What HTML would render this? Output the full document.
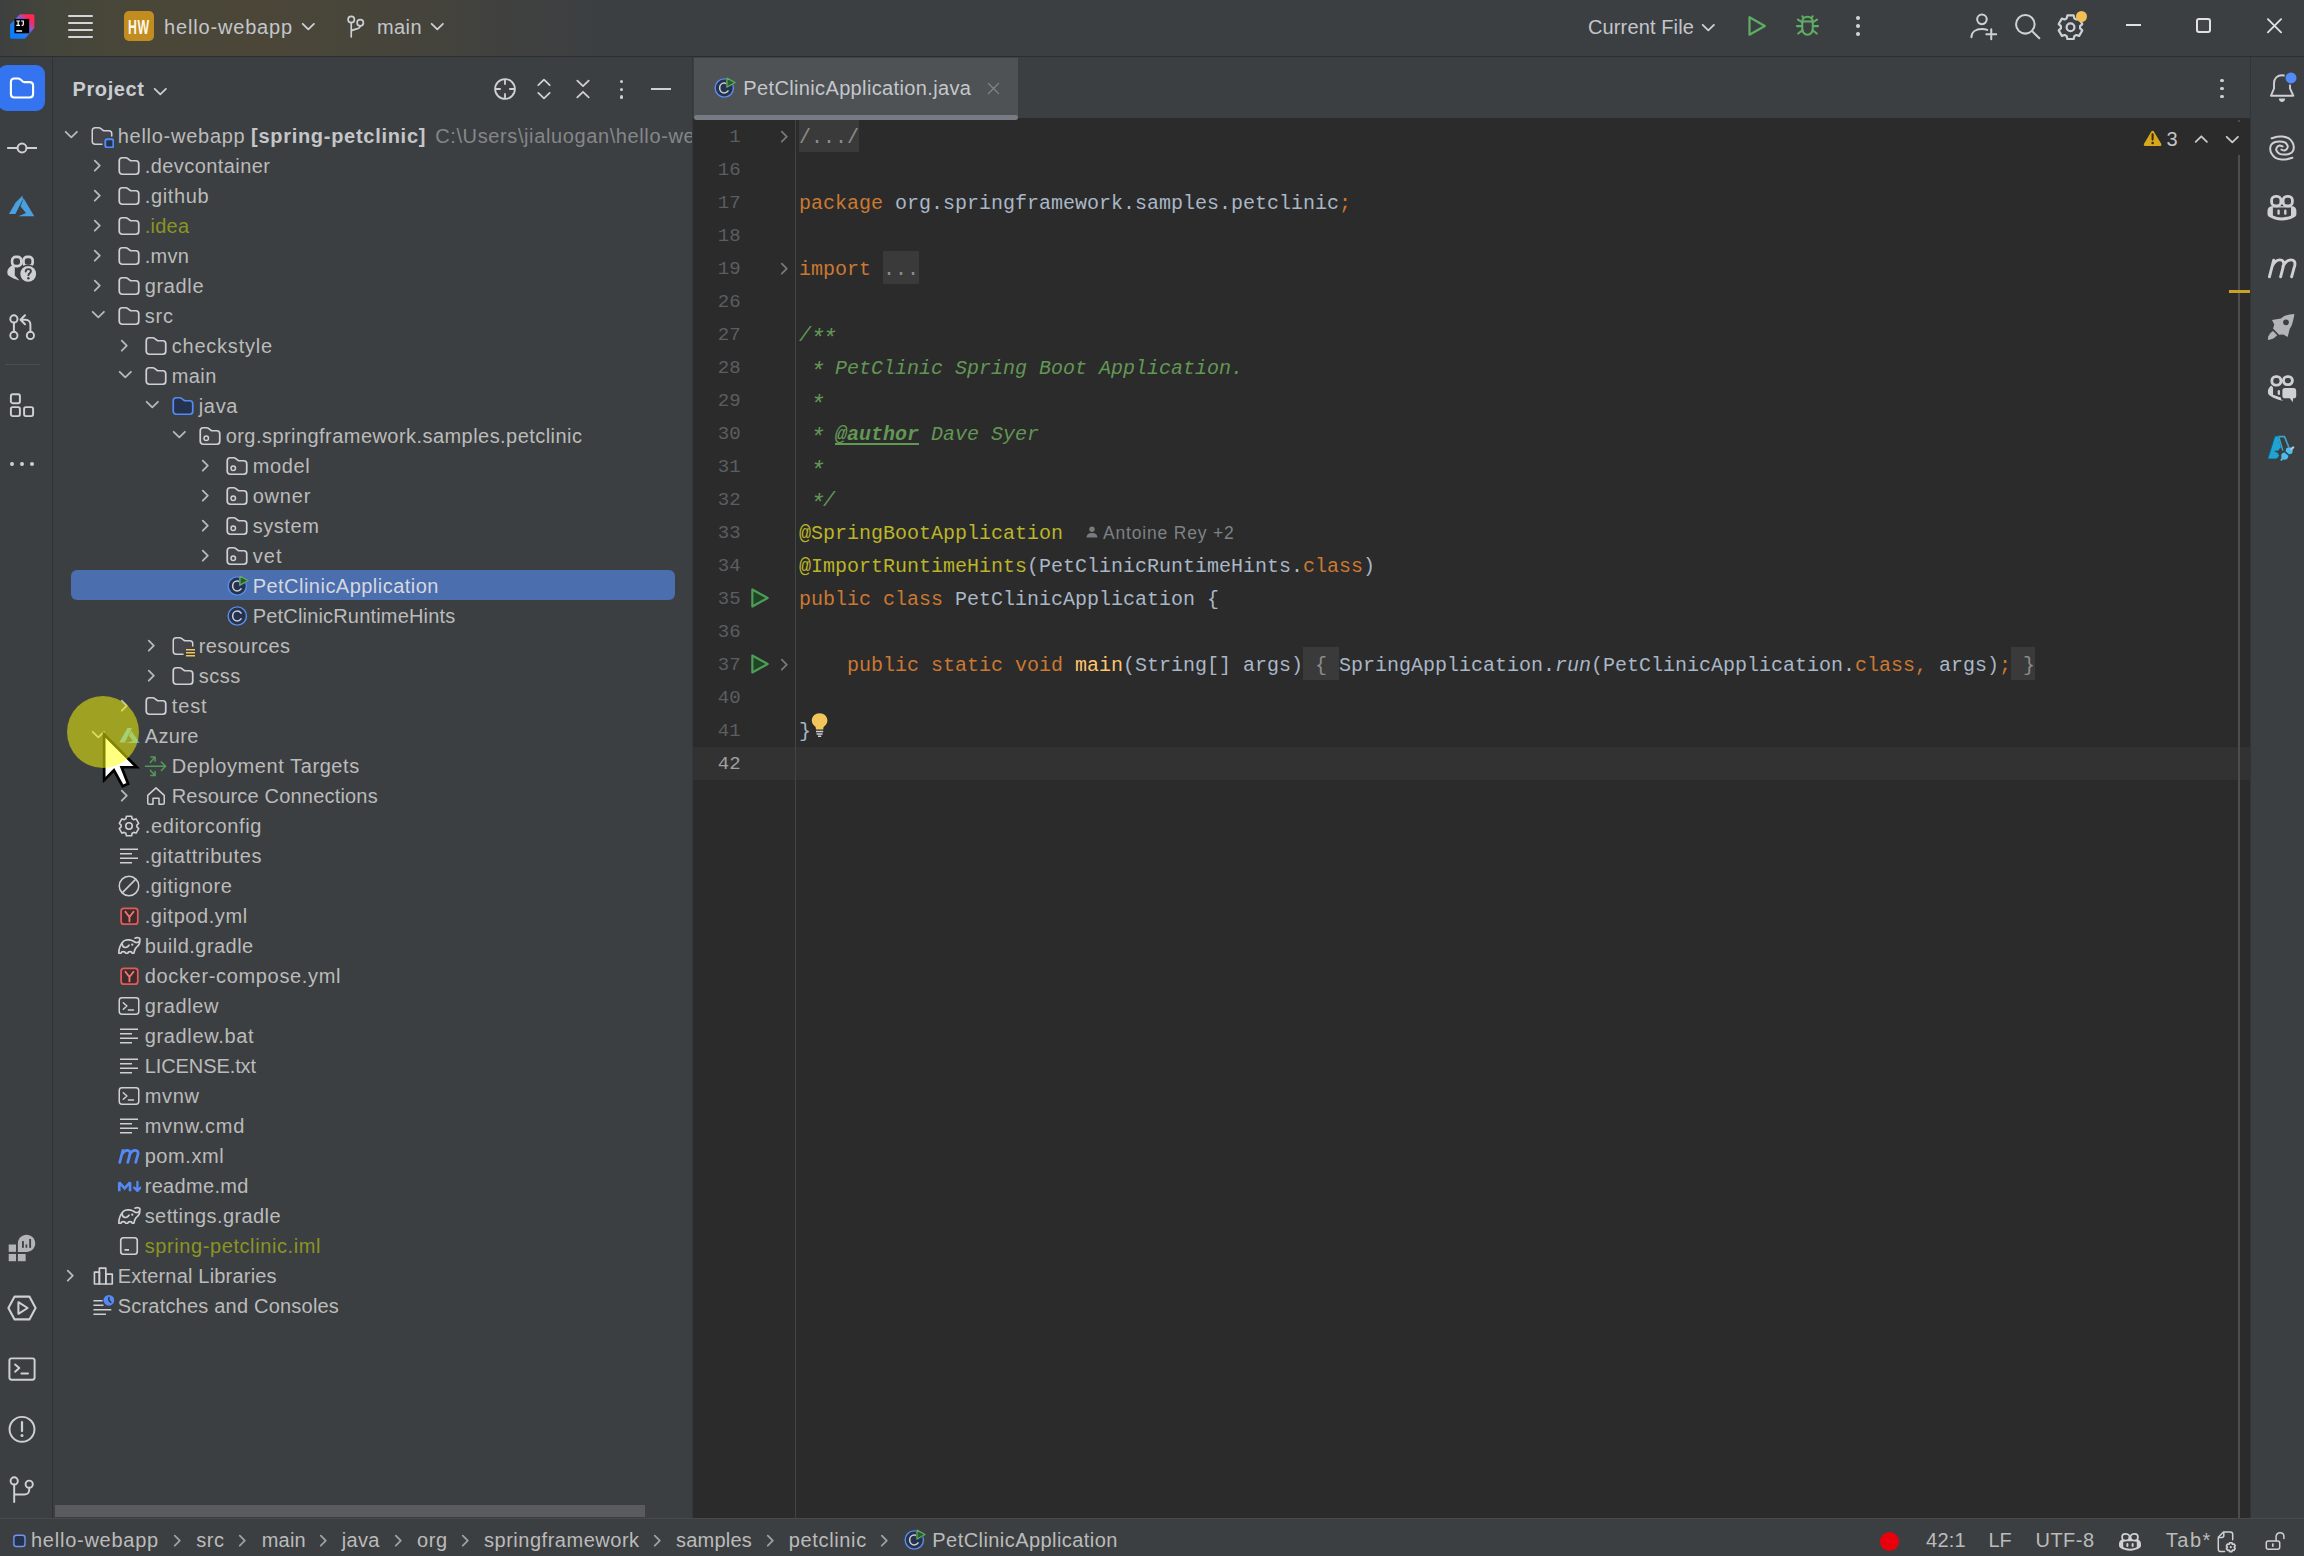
<!DOCTYPE html>
<html><head><meta charset="utf-8"><title>hello-webapp – PetClinicApplication.java</title><style>
html,body{margin:0;padding:0;background:#3C3F41;overflow:hidden}
body{width:2304px;height:1556px;position:relative;font-family:"Liberation Sans",sans-serif;}
.b{position:absolute;display:block}
.t{position:absolute;white-space:pre;display:block}
</style></head><body>
<div class="b" style="left:0px;top:0px;width:2304px;height:56px;background:#3C3F41;background:linear-gradient(90deg,#3e403f 0px,#44453b 50px,#4a4738 140px,#4b4638 260px,#48453a 350px,#44433c 440px,#3f4140 520px,#3C3F41 600px);"></div>
<div class="b" style="left:0px;top:56px;width:2304px;height:1px;background:#2B2D2E;"></div>
<div class="b" style="left:0px;top:57px;width:52px;height:1461px;background:#3C3F41;"></div>
<div class="b" style="left:52px;top:57px;width:1px;height:1461px;background:#303234;"></div>
<div class="b" style="left:53px;top:57px;width:638.5px;height:1461px;background:#3C3F41;"></div>
<div class="b" style="left:691.5px;top:57px;width:1.5px;height:1461px;background:#35383A;"></div>
<div class="b" style="left:693px;top:57px;width:1557px;height:61px;background:#3C3F41;"></div>
<div class="b" style="left:693px;top:118px;width:1557px;height:1400px;background:#2B2B2B;"></div>
<div class="b" style="left:2250px;top:57px;width:54px;height:1461px;background:#3C3F41;"></div>
<div class="b" style="left:2250px;top:57px;width:1px;height:1461px;background:#323537;"></div>
<div class="b" style="left:0px;top:1518px;width:2304px;height:38px;background:#3C3F41;"></div>
<div class="b" style="left:0px;top:1518px;width:2304px;height:1px;background:#47494B;"></div>
<svg class="b" style="left:10px;top:13.6px;" width="25" height="25" viewBox="0 0 25 25" fill="none">
<defs><linearGradient id="ijg" x1="0.1" y1="0.9" x2="0.95" y2="0.05"><stop offset="0" stop-color="#087CFA"/><stop offset="0.42" stop-color="#2C7DF5"/><stop offset="0.62" stop-color="#8A5AD8"/><stop offset="0.82" stop-color="#FE2857"/><stop offset="1" stop-color="#FE2857"/></linearGradient></defs>
<path d="M10.6 0.2H22.8C23.7 0.2 24.4 0.9 24.4 1.8V13.2C24.4 13.7 24.2 14.1 23.9 14.4L15.4 24.2C15.1 24.6 14.7 24.8 14.2 24.8H1.7C0.8 24.8 0.1 24.1 0.1 23.2V11.2C0.1 10.7 0.3 10.3 0.6 10L9.4 0.7C9.7 0.4 10.1 0.2 10.6 0.2Z" fill="url(#ijg)"/>
<rect x="4.4" y="4.9" width="14.8" height="14.4" fill="#000"/>
<path d="M6.3 7H10M8.15 7V11.3M6.3 11.4H10" stroke="#fff" stroke-width="1.2" fill="none"/>
<path d="M11 7H13.3V10.2C13.3 11.1 12.7 11.5 11.6 11.4" stroke="#fff" stroke-width="1.2" fill="none"/>
<rect x="6.3" y="16.3" width="5.8" height="1.4" fill="#fff"/>
</svg>
<div class="b" style="left:68px;top:15px;width:25px;height:2px;background:#D3D5DA;border-radius:1px;"></div>
<div class="b" style="left:68px;top:22px;width:25px;height:2px;background:#D3D5DA;border-radius:1px;"></div>
<div class="b" style="left:68px;top:29px;width:25px;height:2px;background:#D3D5DA;border-radius:1px;"></div>
<div class="b" style="left:68px;top:36px;width:25px;height:2px;background:#D3D5DA;border-radius:1px;"></div>
<div class="b" style="left:124px;top:10.8px;width:30.2px;height:30.2px;background:#C18D20;border-radius:5px;"></div>
<span class="t" style="left:128.3px;top:12.3px;line-height:30px;font-size:19.5px;color:#FFF8E8;font-family:'Liberation Sans',sans-serif;font-weight:700;transform:scaleX(0.63);transform-origin:0 50%;letter-spacing:1px;">HW</span>
<span class="t" style="letter-spacing:0.835px;left:164px;top:11.5px;line-height:30px;font-size:20px;color:#C3C6CB;font-family:'Liberation Sans',sans-serif;">hello-webapp</span>
<svg class="b" style="left:295.5px;top:16.3px;" width="24" height="24" viewBox="0 0 16 16" fill="none"><path d="M4.45 5.2L8.2 8.9L11.95 5.2" stroke="#CDD0D6" stroke-width="1.2" stroke-linecap="round" stroke-linejoin="round"/></svg>
<svg class="b" style="left:343px;top:12px;" width="30" height="30" viewBox="0 0 20 20" fill="none">
<circle cx="5.5" cy="5" r="2.1" stroke="#CDD0D6" stroke-width="1.1"/>
<circle cx="11.5" cy="7.2" r="2.1" stroke="#CDD0D6" stroke-width="1.1"/>
<path d="M5.5 7.1V16.6M5.5 13C5.5 11.2 11.5 12 11.5 9.3" stroke="#CDD0D6" stroke-width="1.1" stroke-linecap="round"/>
</svg>
<span class="t" style="letter-spacing:0.410px;left:377px;top:11.5px;line-height:30px;font-size:20px;color:#C3C6CB;font-family:'Liberation Sans',sans-serif;">main</span>
<svg class="b" style="left:425px;top:16.3px;" width="24" height="24" viewBox="0 0 16 16" fill="none"><path d="M4.45 5.2L8.2 8.9L11.95 5.2" stroke="#CDD0D6" stroke-width="1.2" stroke-linecap="round" stroke-linejoin="round"/></svg>
<span class="t" style="letter-spacing:0.126px;left:1588px;top:11.5px;line-height:30px;font-size:20px;color:#C3C6CB;font-family:'Liberation Sans',sans-serif;">Current File</span>
<svg class="b" style="left:1695.5px;top:17.2px;" width="24" height="24" viewBox="0 0 16 16" fill="none"><path d="M4.45 5.2L8.2 8.9L11.95 5.2" stroke="#CDD0D6" stroke-width="1.2" stroke-linecap="round" stroke-linejoin="round"/></svg>
<svg class="b" style="left:1742px;top:11px;" width="30" height="30" viewBox="0 0 20 20" fill="none"><path d="M5 4.2V15.8L15.2 10Z" stroke="#5FAD65" stroke-width="1.5" stroke-linejoin="round"/></svg>
<svg class="b" style="left:1792px;top:10px;" width="31" height="31" viewBox="0 0 20 20" fill="none">
<path d="M6.6 7.5C6.6 5.6 8.1 4.3 10 4.3C11.9 4.3 13.4 5.6 13.4 7.5V12.3C13.4 14.3 11.9 15.9 10 15.9C8.1 15.9 6.6 14.3 6.6 12.3Z" stroke="#5FAD65" stroke-width="1.3"/>
<path d="M6.8 7.4H13.2" stroke="#5FAD65" stroke-width="1.3"/>
<path d="M7.6 5.2L6.6 4.0M12.4 5.2L13.4 4.0M6.6 10.4H3.2M13.4 10.4H16.8M6.8 8L3.8 6.2M13.2 8L16.2 6.2M6.9 13L4 15.2M13.1 13L16 15.2" stroke="#5FAD65" stroke-width="1.3" stroke-linecap="round"/>
</svg>
<div class="b" style="left:1855.9px;top:15.6px;width:4.2px;height:4.2px;background:#D3D5DA;border-radius:50%;"></div>
<div class="b" style="left:1855.9px;top:23.9px;width:4.2px;height:4.2px;background:#D3D5DA;border-radius:50%;"></div>
<div class="b" style="left:1855.9px;top:32.199999999999996px;width:4.2px;height:4.2px;background:#D3D5DA;border-radius:50%;"></div>
<svg class="b" style="left:1968px;top:11px;" width="31" height="31" viewBox="0 0 20 20" fill="none">
<circle cx="9" cy="5.4" r="3.1" stroke="#CDD0D6" stroke-width="1.3"/>
<path d="M2.2 17C2.2 13.6 5 11.6 9 11.6C10.3 11.6 11.4 11.8 12.4 12.2" stroke="#CDD0D6" stroke-width="1.3" stroke-linecap="round"/>
<path d="M15 11.8V18.2M11.8 15H18.2" stroke="#CDD0D6" stroke-width="1.3" stroke-linecap="round"/>
</svg>
<svg class="b" style="left:2012px;top:11px;" width="31" height="31" viewBox="0 0 20 20" fill="none">
<circle cx="8.6" cy="8.6" r="6" stroke="#CDD0D6" stroke-width="1.3"/>
<path d="M13 13L17.6 17.6" stroke="#CDD0D6" stroke-width="1.3" stroke-linecap="round"/>
</svg>
<svg class="b" style="left:2055px;top:11px;" width="31" height="31" viewBox="-0.5 -0.9 17 17" fill="none"><path d="M5.90 3.14 L6.27 1.53 L9.73 1.53 L10.10 3.14 L11.16 3.75 L12.74 3.26 L14.47 6.27 L13.26 7.39 L13.26 8.61 L14.47 9.73 L12.74 12.74 L11.16 12.25 L10.10 12.86 L9.73 14.47 L6.27 14.47 L5.90 12.86 L4.84 12.25 L3.26 12.74 L1.53 9.73 L2.74 8.61 L2.74 7.39 L1.53 6.27 L3.26 3.26 L4.84 3.75Z" stroke="#CDD0D6" stroke-width="1.2" stroke-linejoin="round"/><circle cx="8" cy="8" r="2.15" stroke="#CDD0D6" stroke-width="1.2"/></svg>
<div class="b" style="left:2075.5px;top:10.5px;width:11px;height:11px;background:#F2BF57;border-radius:50%;"></div>
<div class="b" style="left:2126px;top:23.8px;width:15.2px;height:2px;background:#DFE1E5;"></div>
<div class="b" style="left:2196px;top:17.8px;width:15.2px;height:15.4px;background:#434648;border:2px solid #DFE1E5;border-radius:3px;box-sizing:border-box;"></div>
<svg class="b" style="left:2266px;top:17px;" width="17" height="17" viewBox="0 0 17 17" fill="none"><path d="M1.9 2.1L15.1 15.3M15.1 2.1L1.9 15.3" stroke="#DFE1E5" stroke-width="1.8" stroke-linecap="round"/></svg>
<div class="b" style="left:-2px;top:64.5px;width:46.8px;height:46px;background:#3574F0;border-radius:9px;"></div>
<svg class="b" style="left:7px;top:73px;" width="30" height="30" viewBox="0 0 20 20" fill="none"><path d="M2.6 6C2.6 4.7 3.6 3.7 4.9 3.7H7.4C7.9 3.7 8.4 3.9 8.8 4.2L10.6 5.7C10.9 5.9 11.3 6.1 11.7 6.1H15.1C16.4 6.1 17.4 7.1 17.4 8.4V14C17.4 15.3 16.4 16.3 15.1 16.3H4.9C3.6 16.3 2.6 15.3 2.6 14Z" stroke="#FFFFFF" stroke-width="1.4" stroke-linejoin="round"/></svg>
<svg class="b" style="left:7px;top:133px;" width="30" height="30" viewBox="0 0 20 20" fill="none"><circle cx="10" cy="10" r="3" stroke="#CED0D6" stroke-width="1.3"/><path d="M0.6 10H7M13 10H19.8" stroke="#CED0D6" stroke-width="1.3" stroke-linecap="round"/></svg>
<svg class="b" style="left:8px;top:194px;" width="28" height="24" viewBox="0 0 28 24" fill="none"><path d="M14.4 1.8L14.9 5.2L7.4 20H0.9L7.6 8.4Z" fill="#4A9FDE"/><path d="M15.6 4.2L26.3 22.3H10.4L18 19L12.6 12.4Z" fill="#4A9FDE"/></svg>
<svg class="b" style="left:4px;top:250px;" width="36" height="36" viewBox="0 0 36 36" fill="none">
<rect x="8.1" y="6.9" width="9.2" height="9.2" rx="3.7" stroke="#CED0D6" stroke-width="2.6"/>
<rect x="19.5" y="6.9" width="9.2" height="9.2" rx="3.7" stroke="#CED0D6" stroke-width="2.6"/>
<path d="M8.6 15.2C5.4 16.6 3.3 19.4 3.3 22C3.3 23.6 3.6 24.8 4.6 25.6C7.4 27.8 11.4 29.6 15.6 30.4L10.8 25.4V17.6Z" fill="#CED0D6"/>
<circle cx="24.2" cy="23.8" r="9.3" fill="#3C3F41"/>
<circle cx="24.2" cy="23.8" r="7.9" fill="#CED0D6"/>
<path d="M21.7 21.6C21.7 20 22.7 19.1 24.3 19.1C25.9 19.1 26.9 20 26.9 21.3C26.9 23.2 24.4 23.2 24.4 25.2" stroke="#3C3F41" stroke-width="1.9" stroke-linecap="round" fill="none"/>
<circle cx="24.4" cy="28.2" r="1.2" fill="#3C3F41"/>
</svg>
<svg class="b" style="left:7px;top:312px;" width="30" height="30" viewBox="0 0 20 20" fill="none">
<circle cx="4.6" cy="4.6" r="2.4" stroke="#CED0D6" stroke-width="1.3"/>
<circle cx="4.6" cy="15.6" r="2.4" stroke="#CED0D6" stroke-width="1.3"/>
<circle cx="15.6" cy="15.6" r="2.4" stroke="#CED0D6" stroke-width="1.3"/>
<path d="M4.6 7V13.2M15.6 13.2V8.4C15.6 6.4 14.4 5.2 12.4 5.2H9.4M12 2.2L9 5.2L12 8.2" stroke="#CED0D6" stroke-width="1.3" stroke-linecap="round" stroke-linejoin="round"/>
</svg>
<div class="b" style="left:5px;top:364px;width:35px;height:1px;background:#4B4E50;"></div>
<svg class="b" style="left:7px;top:389.5px;" width="30" height="30" viewBox="0 0 20 20" fill="none">
<rect x="2.6" y="2.8" width="6" height="6" rx="1.2" stroke="#CED0D6" stroke-width="1.3"/>
<rect x="2.6" y="11.4" width="6" height="6" rx="1.2" stroke="#CED0D6" stroke-width="1.3"/>
<rect x="11.4" y="11.4" width="6" height="6" rx="1.2" stroke="#CED0D6" stroke-width="1.3"/>
</svg>
<div class="b" style="left:9.7px;top:461.5px;width:4px;height:4px;background:#CED0D6;border-radius:50%;"></div>
<div class="b" style="left:19.9px;top:461.5px;width:4px;height:4px;background:#CED0D6;border-radius:50%;"></div>
<div class="b" style="left:29.8px;top:461.5px;width:4px;height:4px;background:#CED0D6;border-radius:50%;"></div>
<svg class="b" style="left:2px;top:1228px;" width="40" height="40" viewBox="0 0 40 40" fill="none">
<rect x="6.7" y="16.5" width="7.3" height="7.3" fill="#B2B4B6"/>
<rect x="6.7" y="26" width="7.3" height="7.2" fill="#B2B4B6"/>
<rect x="15.9" y="26" width="7.75" height="7.2" fill="#B2B4B6"/>
<path d="M15.9 23.9V15.4C15.9 10.6 19.8 6.8 24.55 6.8C29.3 6.8 33.2 10.6 33.2 15.4C33.2 20.1 29.3 23.9 24.55 23.9Z" fill="#B2B4B6"/>
<rect x="20" y="13.1" width="1.85" height="6.7" fill="#3C3F41"/>
<rect x="23.6" y="16.4" width="1.6" height="3.4" fill="#3C3F41"/>
<rect x="27.2" y="11" width="1.85" height="8.8" fill="#3C3F41"/>
</svg>
<svg class="b" style="left:6px;top:1293px;" width="32" height="30" viewBox="0 0 32 30" fill="none">
<path d="M8.6 3.6H23.4L29.6 15L23.4 26.4H8.6L2.4 15Z" stroke="#CED0D6" stroke-width="2.1" stroke-linejoin="round"/>
<path d="M12.4 9.2V20.8L21.6 15Z" stroke="#CED0D6" stroke-width="2" stroke-linejoin="round"/>
</svg>
<svg class="b" style="left:7px;top:1354px;" width="30" height="30" viewBox="0 0 20 20" fill="none">
<rect x="1.6" y="2.9" width="16.8" height="14.2" rx="1.4" stroke="#CED0D6" stroke-width="1.3"/>
<path d="M5.4 7L8.2 9.4L5.4 11.8M9.6 13H14" stroke="#CED0D6" stroke-width="1.3" stroke-linecap="round" stroke-linejoin="round"/>
</svg>
<svg class="b" style="left:7px;top:1414px;" width="30" height="30" viewBox="0 0 20 20" fill="none">
<circle cx="10" cy="10.2" r="8.3" stroke="#CED0D6" stroke-width="1.3"/>
<path d="M10 5.4V11.4" stroke="#CED0D6" stroke-width="1.5" stroke-linecap="round"/>
<circle cx="10" cy="14.4" r="1" fill="#CED0D6"/>
</svg>
<svg class="b" style="left:7px;top:1474px;" width="30" height="30" viewBox="0 0 20 20" fill="none">
<circle cx="4.8" cy="4.6" r="2.4" stroke="#CED0D6" stroke-width="1.3"/>
<circle cx="14.8" cy="6.8" r="2.4" stroke="#CED0D6" stroke-width="1.3"/>
<path d="M4.8 7V18.6M4.8 13.6H11.6C13.4 13.6 14.8 12.4 14.8 10.6V9.2" stroke="#CED0D6" stroke-width="1.3" stroke-linecap="round" stroke-linejoin="round"/>
</svg>
<span class="t" style="letter-spacing:0.598px;left:72.5px;top:74px;line-height:30px;font-size:20px;color:#C9CCD1;font-family:'Liberation Sans',sans-serif;font-weight:700;">Project</span>
<svg class="b" style="left:148px;top:80.6px;" width="24" height="24" viewBox="0 0 16 16" fill="none"><path d="M4.45 5.2L8.2 8.9L11.95 5.2" stroke="#C9CCD1" stroke-width="1.2" stroke-linecap="round" stroke-linejoin="round"/></svg>
<svg class="b" style="left:490px;top:74px;" width="30" height="30" viewBox="0 0 20 20" fill="none"><circle cx="10" cy="10" r="6.6" stroke="#CED0D6" stroke-width="1.2"/><path d="M10 3.4V7.2M10 12.8V16.6M3.4 10H7.2M12.8 10H16.6" stroke="#CED0D6" stroke-width="1.2"/></svg>
<svg class="b" style="left:528.5px;top:74px;" width="30" height="30" viewBox="0 0 20 20" fill="none"><path d="M6.2 7.4L10 3.8L13.8 7.4M6.2 12.6L10 16.2L13.8 12.6" stroke="#CED0D6" stroke-width="1.2" stroke-linecap="round" stroke-linejoin="round"/></svg>
<svg class="b" style="left:567.5px;top:74px;" width="30" height="30" viewBox="0 0 20 20" fill="none"><path d="M6.2 4.4L10 8.1L13.8 4.4M6.2 15.6L10 11.9L13.8 15.6" stroke="#CED0D6" stroke-width="1.2" stroke-linecap="round" stroke-linejoin="round"/></svg>
<div class="b" style="left:619.8px;top:80.0px;width:3.4px;height:3.4px;background:#CED0D6;border-radius:50%;"></div>
<div class="b" style="left:619.8px;top:87.6px;width:3.4px;height:3.4px;background:#CED0D6;border-radius:50%;"></div>
<div class="b" style="left:619.8px;top:95.3px;width:3.4px;height:3.4px;background:#CED0D6;border-radius:50%;"></div>
<div class="b" style="left:651px;top:88.3px;width:20px;height:1.7px;background:#CED0D6;"></div>
<div class="b" style="left:71px;top:570.2px;width:603.5px;height:30px;background:#4B6EAF;border-radius:6px;"></div>
<svg class="b" style="left:59px;top:124px;" width="24" height="24" viewBox="0 0 16 16" fill="none"><path d="M4.45 5.2L8.2 8.9L11.95 5.2" stroke="#B4B8BF" stroke-width="1.2" stroke-linecap="round" stroke-linejoin="round"/></svg>
<svg class="b" style="left:89.5px;top:124px;" width="24" height="24" viewBox="0 0 16 16" fill="none"><path d="M14.5 8V6.5C14.5 5.4 13.6 4.5 12.5 4.5H9.7C9.25 4.5 8.8 4.35 8.45 4.05L7.05 2.95C6.7 2.65 6.25 2.5 5.8 2.5H3.5C2.4 2.5 1.5 3.4 1.5 4.5V11.5C1.5 12.6 2.4 13.5 3.5 13.5H8" fill="#43454A" stroke="#CED0D6" stroke-linecap="round"/><rect x="10.2" y="10.2" width="5.4" height="5.4" rx="1.3" fill="#25324D" stroke="#548AF7" stroke-width="1.3"/></svg>
<span class="t" style="letter-spacing:0.735px;left:117.7px;top:120.5px;line-height:30px;font-size:20px;color:#BBBBBB;font-family:'Liberation Sans',sans-serif;">hello-webapp</span>
<span class="t" style="letter-spacing:0.715px;left:251.0px;top:120.5px;line-height:30px;font-size:20px;color:#C4C6C9;font-family:'Liberation Sans',sans-serif;font-weight:700;">[spring-petclinic]</span>
<div class="b" style="left:434px;top:121px;width:257.5px;height:30px;overflow:hidden">
<span class="t" style="letter-spacing:0.614px;left:1.1999999999999886px;top:-0.5px;line-height:30px;font-size:20px;color:#84878A;font-family:'Liberation Sans',sans-serif;">C:\Users\jialuogan\hello-webapp</span>
</div>
<svg class="b" style="left:86px;top:154px;" width="24" height="24" viewBox="0 0 16 16" fill="none"><path d="M5.85 4.45L9.2 7.8L5.85 11.15" stroke="#B4B8BF" stroke-width="1.2" stroke-linecap="round" stroke-linejoin="round"/></svg>
<svg class="b" style="left:116.5px;top:154px;" width="24" height="24" viewBox="0 0 16 16" fill="none"><path d="M1.5 4.5C1.5 3.4 2.4 2.5 3.5 2.5H5.8C6.25 2.5 6.7 2.65 7.05 2.95L8.45 4.05C8.8 4.35 9.25 4.5 9.7 4.5H12.5C13.6 4.5 14.5 5.4 14.5 6.5V11.5C14.5 12.6 13.6 13.5 12.5 13.5H3.5C2.4 13.5 1.5 12.6 1.5 11.5V4.5Z" fill="#43454A" stroke="#CED0D6" stroke-width="1.15"/></svg>
<span class="t" style="letter-spacing:0.432px;left:144.70000000000002px;top:150.5px;line-height:30px;font-size:20px;color:#BBBBBB;font-family:'Liberation Sans',sans-serif;">.devcontainer</span>
<svg class="b" style="left:86px;top:184px;" width="24" height="24" viewBox="0 0 16 16" fill="none"><path d="M5.85 4.45L9.2 7.8L5.85 11.15" stroke="#B4B8BF" stroke-width="1.2" stroke-linecap="round" stroke-linejoin="round"/></svg>
<svg class="b" style="left:116.5px;top:184px;" width="24" height="24" viewBox="0 0 16 16" fill="none"><path d="M1.5 4.5C1.5 3.4 2.4 2.5 3.5 2.5H5.8C6.25 2.5 6.7 2.65 7.05 2.95L8.45 4.05C8.8 4.35 9.25 4.5 9.7 4.5H12.5C13.6 4.5 14.5 5.4 14.5 6.5V11.5C14.5 12.6 13.6 13.5 12.5 13.5H3.5C2.4 13.5 1.5 12.6 1.5 11.5V4.5Z" fill="#43454A" stroke="#CED0D6" stroke-width="1.15"/></svg>
<span class="t" style="letter-spacing:0.648px;left:144.70000000000002px;top:180.5px;line-height:30px;font-size:20px;color:#BBBBBB;font-family:'Liberation Sans',sans-serif;">.github</span>
<svg class="b" style="left:86px;top:214px;" width="24" height="24" viewBox="0 0 16 16" fill="none"><path d="M5.85 4.45L9.2 7.8L5.85 11.15" stroke="#B4B8BF" stroke-width="1.2" stroke-linecap="round" stroke-linejoin="round"/></svg>
<svg class="b" style="left:116.5px;top:214px;" width="24" height="24" viewBox="0 0 16 16" fill="none"><path d="M1.5 4.5C1.5 3.4 2.4 2.5 3.5 2.5H5.8C6.25 2.5 6.7 2.65 7.05 2.95L8.45 4.05C8.8 4.35 9.25 4.5 9.7 4.5H12.5C13.6 4.5 14.5 5.4 14.5 6.5V11.5C14.5 12.6 13.6 13.5 12.5 13.5H3.5C2.4 13.5 1.5 12.6 1.5 11.5V4.5Z" fill="#43454A" stroke="#CED0D6" stroke-width="1.15"/></svg>
<span class="t" style="letter-spacing:0.245px;left:144.70000000000002px;top:210.5px;line-height:30px;font-size:20px;color:#8B9423;font-family:'Liberation Sans',sans-serif;">.idea</span>
<svg class="b" style="left:86px;top:244px;" width="24" height="24" viewBox="0 0 16 16" fill="none"><path d="M5.85 4.45L9.2 7.8L5.85 11.15" stroke="#B4B8BF" stroke-width="1.2" stroke-linecap="round" stroke-linejoin="round"/></svg>
<svg class="b" style="left:116.5px;top:244px;" width="24" height="24" viewBox="0 0 16 16" fill="none"><path d="M1.5 4.5C1.5 3.4 2.4 2.5 3.5 2.5H5.8C6.25 2.5 6.7 2.65 7.05 2.95L8.45 4.05C8.8 4.35 9.25 4.5 9.7 4.5H12.5C13.6 4.5 14.5 5.4 14.5 6.5V11.5C14.5 12.6 13.6 13.5 12.5 13.5H3.5C2.4 13.5 1.5 12.6 1.5 11.5V4.5Z" fill="#43454A" stroke="#CED0D6" stroke-width="1.15"/></svg>
<span class="t" style="letter-spacing:0.314px;left:144.70000000000002px;top:240.5px;line-height:30px;font-size:20px;color:#BBBBBB;font-family:'Liberation Sans',sans-serif;">.mvn</span>
<svg class="b" style="left:86px;top:274px;" width="24" height="24" viewBox="0 0 16 16" fill="none"><path d="M5.85 4.45L9.2 7.8L5.85 11.15" stroke="#B4B8BF" stroke-width="1.2" stroke-linecap="round" stroke-linejoin="round"/></svg>
<svg class="b" style="left:116.5px;top:274px;" width="24" height="24" viewBox="0 0 16 16" fill="none"><path d="M1.5 4.5C1.5 3.4 2.4 2.5 3.5 2.5H5.8C6.25 2.5 6.7 2.65 7.05 2.95L8.45 4.05C8.8 4.35 9.25 4.5 9.7 4.5H12.5C13.6 4.5 14.5 5.4 14.5 6.5V11.5C14.5 12.6 13.6 13.5 12.5 13.5H3.5C2.4 13.5 1.5 12.6 1.5 11.5V4.5Z" fill="#43454A" stroke="#CED0D6" stroke-width="1.15"/></svg>
<span class="t" style="letter-spacing:0.648px;left:144.70000000000002px;top:270.5px;line-height:30px;font-size:20px;color:#BBBBBB;font-family:'Liberation Sans',sans-serif;">gradle</span>
<svg class="b" style="left:86px;top:304px;" width="24" height="24" viewBox="0 0 16 16" fill="none"><path d="M4.45 5.2L8.2 8.9L11.95 5.2" stroke="#B4B8BF" stroke-width="1.2" stroke-linecap="round" stroke-linejoin="round"/></svg>
<svg class="b" style="left:116.5px;top:304px;" width="24" height="24" viewBox="0 0 16 16" fill="none"><path d="M1.5 4.5C1.5 3.4 2.4 2.5 3.5 2.5H5.8C6.25 2.5 6.7 2.65 7.05 2.95L8.45 4.05C8.8 4.35 9.25 4.5 9.7 4.5H12.5C13.6 4.5 14.5 5.4 14.5 6.5V11.5C14.5 12.6 13.6 13.5 12.5 13.5H3.5C2.4 13.5 1.5 12.6 1.5 11.5V4.5Z" fill="#43454A" stroke="#CED0D6" stroke-width="1.15"/></svg>
<span class="t" style="letter-spacing:0.776px;left:144.70000000000002px;top:300.5px;line-height:30px;font-size:20px;color:#BBBBBB;font-family:'Liberation Sans',sans-serif;">src</span>
<svg class="b" style="left:113px;top:334px;" width="24" height="24" viewBox="0 0 16 16" fill="none"><path d="M5.85 4.45L9.2 7.8L5.85 11.15" stroke="#B4B8BF" stroke-width="1.2" stroke-linecap="round" stroke-linejoin="round"/></svg>
<svg class="b" style="left:143.5px;top:334px;" width="24" height="24" viewBox="0 0 16 16" fill="none"><path d="M1.5 4.5C1.5 3.4 2.4 2.5 3.5 2.5H5.8C6.25 2.5 6.7 2.65 7.05 2.95L8.45 4.05C8.8 4.35 9.25 4.5 9.7 4.5H12.5C13.6 4.5 14.5 5.4 14.5 6.5V11.5C14.5 12.6 13.6 13.5 12.5 13.5H3.5C2.4 13.5 1.5 12.6 1.5 11.5V4.5Z" fill="#43454A" stroke="#CED0D6" stroke-width="1.15"/></svg>
<span class="t" style="letter-spacing:0.783px;left:171.70000000000002px;top:330.5px;line-height:30px;font-size:20px;color:#BBBBBB;font-family:'Liberation Sans',sans-serif;">checkstyle</span>
<svg class="b" style="left:113px;top:364px;" width="24" height="24" viewBox="0 0 16 16" fill="none"><path d="M4.45 5.2L8.2 8.9L11.95 5.2" stroke="#B4B8BF" stroke-width="1.2" stroke-linecap="round" stroke-linejoin="round"/></svg>
<svg class="b" style="left:143.5px;top:364px;" width="24" height="24" viewBox="0 0 16 16" fill="none"><path d="M1.5 4.5C1.5 3.4 2.4 2.5 3.5 2.5H5.8C6.25 2.5 6.7 2.65 7.05 2.95L8.45 4.05C8.8 4.35 9.25 4.5 9.7 4.5H12.5C13.6 4.5 14.5 5.4 14.5 6.5V11.5C14.5 12.6 13.6 13.5 12.5 13.5H3.5C2.4 13.5 1.5 12.6 1.5 11.5V4.5Z" fill="#43454A" stroke="#CED0D6" stroke-width="1.15"/></svg>
<span class="t" style="letter-spacing:0.435px;left:171.70000000000002px;top:360.5px;line-height:30px;font-size:20px;color:#BBBBBB;font-family:'Liberation Sans',sans-serif;">main</span>
<svg class="b" style="left:140px;top:394px;" width="24" height="24" viewBox="0 0 16 16" fill="none"><path d="M4.45 5.2L8.2 8.9L11.95 5.2" stroke="#B4B8BF" stroke-width="1.2" stroke-linecap="round" stroke-linejoin="round"/></svg>
<svg class="b" style="left:170.5px;top:394px;" width="24" height="24" viewBox="0 0 16 16" fill="none"><path d="M1.5 4.5C1.5 3.4 2.4 2.5 3.5 2.5H5.8C6.25 2.5 6.7 2.65 7.05 2.95L8.45 4.05C8.8 4.35 9.25 4.5 9.7 4.5H12.5C13.6 4.5 14.5 5.4 14.5 6.5V11.5C14.5 12.6 13.6 13.5 12.5 13.5H3.5C2.4 13.5 1.5 12.6 1.5 11.5V4.5Z" fill="#25324D" stroke="#548AF7" stroke-width="1.15"/></svg>
<span class="t" style="letter-spacing:0.699px;left:198.70000000000002px;top:390.5px;line-height:30px;font-size:20px;color:#BBBBBB;font-family:'Liberation Sans',sans-serif;">java</span>
<svg class="b" style="left:167px;top:424px;" width="24" height="24" viewBox="0 0 16 16" fill="none"><path d="M4.45 5.2L8.2 8.9L11.95 5.2" stroke="#B4B8BF" stroke-width="1.2" stroke-linecap="round" stroke-linejoin="round"/></svg>
<svg class="b" style="left:197.5px;top:424px;" width="24" height="24" viewBox="0 0 16 16" fill="none"><path d="M1.5 4.5C1.5 3.4 2.4 2.5 3.5 2.5H5.8C6.25 2.5 6.7 2.65 7.05 2.95L8.45 4.05C8.8 4.35 9.25 4.5 9.7 4.5H12.5C13.6 4.5 14.5 5.4 14.5 6.5V11.5C14.5 12.6 13.6 13.5 12.5 13.5H3.5C2.4 13.5 1.5 12.6 1.5 11.5V4.5Z" fill="#43454A" stroke="#CED0D6" stroke-width="1.15"/><circle cx="5.5" cy="9.5" r="1.5" stroke="#CED0D6"/></svg>
<span class="t" style="letter-spacing:0.448px;left:225.70000000000002px;top:420.5px;line-height:30px;font-size:20px;color:#BBBBBB;font-family:'Liberation Sans',sans-serif;">org.springframework.samples.petclinic</span>
<svg class="b" style="left:194px;top:454px;" width="24" height="24" viewBox="0 0 16 16" fill="none"><path d="M5.85 4.45L9.2 7.8L5.85 11.15" stroke="#B4B8BF" stroke-width="1.2" stroke-linecap="round" stroke-linejoin="round"/></svg>
<svg class="b" style="left:224.5px;top:454px;" width="24" height="24" viewBox="0 0 16 16" fill="none"><path d="M1.5 4.5C1.5 3.4 2.4 2.5 3.5 2.5H5.8C6.25 2.5 6.7 2.65 7.05 2.95L8.45 4.05C8.8 4.35 9.25 4.5 9.7 4.5H12.5C13.6 4.5 14.5 5.4 14.5 6.5V11.5C14.5 12.6 13.6 13.5 12.5 13.5H3.5C2.4 13.5 1.5 12.6 1.5 11.5V4.5Z" fill="#43454A" stroke="#CED0D6" stroke-width="1.15"/><circle cx="5.5" cy="9.5" r="1.5" stroke="#CED0D6"/></svg>
<span class="t" style="letter-spacing:0.623px;left:252.70000000000002px;top:450.5px;line-height:30px;font-size:20px;color:#BBBBBB;font-family:'Liberation Sans',sans-serif;">model</span>
<svg class="b" style="left:194px;top:484px;" width="24" height="24" viewBox="0 0 16 16" fill="none"><path d="M5.85 4.45L9.2 7.8L5.85 11.15" stroke="#B4B8BF" stroke-width="1.2" stroke-linecap="round" stroke-linejoin="round"/></svg>
<svg class="b" style="left:224.5px;top:484px;" width="24" height="24" viewBox="0 0 16 16" fill="none"><path d="M1.5 4.5C1.5 3.4 2.4 2.5 3.5 2.5H5.8C6.25 2.5 6.7 2.65 7.05 2.95L8.45 4.05C8.8 4.35 9.25 4.5 9.7 4.5H12.5C13.6 4.5 14.5 5.4 14.5 6.5V11.5C14.5 12.6 13.6 13.5 12.5 13.5H3.5C2.4 13.5 1.5 12.6 1.5 11.5V4.5Z" fill="#43454A" stroke="#CED0D6" stroke-width="1.15"/><circle cx="5.5" cy="9.5" r="1.5" stroke="#CED0D6"/></svg>
<span class="t" style="letter-spacing:0.783px;left:252.70000000000002px;top:480.5px;line-height:30px;font-size:20px;color:#BBBBBB;font-family:'Liberation Sans',sans-serif;">owner</span>
<svg class="b" style="left:194px;top:514px;" width="24" height="24" viewBox="0 0 16 16" fill="none"><path d="M5.85 4.45L9.2 7.8L5.85 11.15" stroke="#B4B8BF" stroke-width="1.2" stroke-linecap="round" stroke-linejoin="round"/></svg>
<svg class="b" style="left:224.5px;top:514px;" width="24" height="24" viewBox="0 0 16 16" fill="none"><path d="M1.5 4.5C1.5 3.4 2.4 2.5 3.5 2.5H5.8C6.25 2.5 6.7 2.65 7.05 2.95L8.45 4.05C8.8 4.35 9.25 4.5 9.7 4.5H12.5C13.6 4.5 14.5 5.4 14.5 6.5V11.5C14.5 12.6 13.6 13.5 12.5 13.5H3.5C2.4 13.5 1.5 12.6 1.5 11.5V4.5Z" fill="#43454A" stroke="#CED0D6" stroke-width="1.15"/><circle cx="5.5" cy="9.5" r="1.5" stroke="#CED0D6"/></svg>
<span class="t" style="letter-spacing:0.559px;left:252.70000000000002px;top:510.5px;line-height:30px;font-size:20px;color:#BBBBBB;font-family:'Liberation Sans',sans-serif;">system</span>
<svg class="b" style="left:194px;top:544px;" width="24" height="24" viewBox="0 0 16 16" fill="none"><path d="M5.85 4.45L9.2 7.8L5.85 11.15" stroke="#B4B8BF" stroke-width="1.2" stroke-linecap="round" stroke-linejoin="round"/></svg>
<svg class="b" style="left:224.5px;top:544px;" width="24" height="24" viewBox="0 0 16 16" fill="none"><path d="M1.5 4.5C1.5 3.4 2.4 2.5 3.5 2.5H5.8C6.25 2.5 6.7 2.65 7.05 2.95L8.45 4.05C8.8 4.35 9.25 4.5 9.7 4.5H12.5C13.6 4.5 14.5 5.4 14.5 6.5V11.5C14.5 12.6 13.6 13.5 12.5 13.5H3.5C2.4 13.5 1.5 12.6 1.5 11.5V4.5Z" fill="#43454A" stroke="#CED0D6" stroke-width="1.15"/><circle cx="5.5" cy="9.5" r="1.5" stroke="#CED0D6"/></svg>
<span class="t" style="letter-spacing:1.038px;left:252.70000000000002px;top:540.5px;line-height:30px;font-size:20px;color:#BBBBBB;font-family:'Liberation Sans',sans-serif;">vet</span>
<svg class="b" style="left:224.5px;top:574px;" width="24" height="24" viewBox="0 0 16 16" fill="none"><circle cx="8.2" cy="8" r="6.1" fill="#25324D" stroke="#5A8DEE" stroke-width="0.95"/><path d="M10.7 6.1C10.1 5.2 9.2 4.7 8.2 4.7C6.4 4.7 5.1 6.1 5.1 8C5.1 9.9 6.4 11.3 8.2 11.3C9.2 11.3 10.1 10.8 10.7 9.9" stroke="#C9CDD6" stroke-width="1.05" stroke-linecap="round"/><path d="M9.3 0.3V8.4L16.6 4.35Z" fill="#4B6EAF"/><path d="M10.0 1.4V7.3L15.4 4.35Z" fill="#2C5A30" stroke="#5FAD65" stroke-width="0.8" stroke-linejoin="round"/></svg>
<span class="t" style="letter-spacing:0.472px;left:252.70000000000002px;top:570.5px;line-height:30px;font-size:20px;color:#D5D8DD;font-family:'Liberation Sans',sans-serif;">PetClinicApplication</span>
<svg class="b" style="left:224.5px;top:604px;" width="24" height="24" viewBox="0 0 16 16" fill="none"><circle cx="8.2" cy="8" r="6.1" fill="#25324D" stroke="#5A8DEE" stroke-width="0.95"/><path d="M10.7 6.1C10.1 5.2 9.2 4.7 8.2 4.7C6.4 4.7 5.1 6.1 5.1 8C5.1 9.9 6.4 11.3 8.2 11.3C9.2 11.3 10.1 10.8 10.7 9.9" stroke="#C9CDD6" stroke-width="1.05" stroke-linecap="round"/></svg>
<span class="t" style="letter-spacing:0.182px;left:252.70000000000002px;top:600.5px;line-height:30px;font-size:20px;color:#BBBBBB;font-family:'Liberation Sans',sans-serif;">PetClinicRuntimeHints</span>
<svg class="b" style="left:140px;top:634px;" width="24" height="24" viewBox="0 0 16 16" fill="none"><path d="M5.85 4.45L9.2 7.8L5.85 11.15" stroke="#B4B8BF" stroke-width="1.2" stroke-linecap="round" stroke-linejoin="round"/></svg>
<svg class="b" style="left:170.5px;top:634px;" width="24" height="24" viewBox="0 0 16 16" fill="none"><path d="M14.5 8V6.5C14.5 5.4 13.6 4.5 12.5 4.5H9.7C9.25 4.5 8.8 4.35 8.45 4.05L7.05 2.95C6.7 2.65 6.25 2.5 5.8 2.5H3.5C2.4 2.5 1.5 3.4 1.5 4.5V11.5C1.5 12.6 2.4 13.5 3.5 13.5H8" fill="#43454A" stroke="#CED0D6" stroke-linecap="round"/><path d="M10 10.5H16M10 12.5H16M10 14.5H16" stroke="#F2C55C" stroke-width="1"/></svg>
<span class="t" style="letter-spacing:0.432px;left:198.70000000000002px;top:630.5px;line-height:30px;font-size:20px;color:#BBBBBB;font-family:'Liberation Sans',sans-serif;">resources</span>
<svg class="b" style="left:140px;top:664px;" width="24" height="24" viewBox="0 0 16 16" fill="none"><path d="M5.85 4.45L9.2 7.8L5.85 11.15" stroke="#B4B8BF" stroke-width="1.2" stroke-linecap="round" stroke-linejoin="round"/></svg>
<svg class="b" style="left:170.5px;top:664px;" width="24" height="24" viewBox="0 0 16 16" fill="none"><path d="M1.5 4.5C1.5 3.4 2.4 2.5 3.5 2.5H5.8C6.25 2.5 6.7 2.65 7.05 2.95L8.45 4.05C8.8 4.35 9.25 4.5 9.7 4.5H12.5C13.6 4.5 14.5 5.4 14.5 6.5V11.5C14.5 12.6 13.6 13.5 12.5 13.5H3.5C2.4 13.5 1.5 12.6 1.5 11.5V4.5Z" fill="#43454A" stroke="#CED0D6" stroke-width="1.15"/></svg>
<span class="t" style="letter-spacing:0.500px;left:198.70000000000002px;top:660.5px;line-height:30px;font-size:20px;color:#BBBBBB;font-family:'Liberation Sans',sans-serif;">scss</span>
<svg class="b" style="left:113px;top:694px;" width="24" height="24" viewBox="0 0 16 16" fill="none"><path d="M5.85 4.45L9.2 7.8L5.85 11.15" stroke="#B4B8BF" stroke-width="1.2" stroke-linecap="round" stroke-linejoin="round"/></svg>
<svg class="b" style="left:143.5px;top:694px;" width="24" height="24" viewBox="0 0 16 16" fill="none"><path d="M1.5 4.5C1.5 3.4 2.4 2.5 3.5 2.5H5.8C6.25 2.5 6.7 2.65 7.05 2.95L8.45 4.05C8.8 4.35 9.25 4.5 9.7 4.5H12.5C13.6 4.5 14.5 5.4 14.5 6.5V11.5C14.5 12.6 13.6 13.5 12.5 13.5H3.5C2.4 13.5 1.5 12.6 1.5 11.5V4.5Z" fill="#43454A" stroke="#CED0D6" stroke-width="1.15"/></svg>
<span class="t" style="letter-spacing:0.912px;left:171.70000000000002px;top:690.5px;line-height:30px;font-size:20px;color:#BBBBBB;font-family:'Liberation Sans',sans-serif;">test</span>
<svg class="b" style="left:86px;top:724px;" width="24" height="24" viewBox="0 0 16 16" fill="none"><path d="M4.45 5.2L8.2 8.9L11.95 5.2" stroke="#B4B8BF" stroke-width="1.2" stroke-linecap="round" stroke-linejoin="round"/></svg>
<svg class="b" style="left:116.5px;top:724px;" width="24" height="24" viewBox="0 0 16 16" fill="none"><path d="M7.0 2.6H10.0L5.2 12.4H1.5Z" fill="#4A9FE3"/><path d="M9.4 4.4L15.2 12.6H5.4L10.6 11.4L7.9 7.9Z" fill="#4A9FE3" opacity="0.9"/></svg>
<span class="t" style="letter-spacing:0.350px;left:144.70000000000002px;top:720.5px;line-height:30px;font-size:20px;color:#BBBBBB;font-family:'Liberation Sans',sans-serif;">Azure</span>
<svg class="b" style="left:143.5px;top:754px;" width="24" height="24" viewBox="0 0 16 16" fill="none"><path d="M1 8.2H14.4M11.6 5.4L14.4 8.2L11.6 11" stroke="#57965C" stroke-width="1" stroke-linecap="round" stroke-linejoin="round"/><path d="M4.2 5.6L7.2 2.2M4.6 2H7.4V4.8" stroke="#57965C" stroke-width="1" stroke-linecap="round" stroke-linejoin="round"/><path d="M4.2 10.8L7.2 14.2M4.6 14.4H7.4V11.6" stroke="#57965C" stroke-width="1" stroke-linecap="round" stroke-linejoin="round"/></svg>
<span class="t" style="letter-spacing:0.589px;left:171.70000000000002px;top:750.5px;line-height:30px;font-size:20px;color:#BBBBBB;font-family:'Liberation Sans',sans-serif;">Deployment Targets</span>
<svg class="b" style="left:113px;top:784px;" width="24" height="24" viewBox="0 0 16 16" fill="none"><path d="M5.85 4.45L9.2 7.8L5.85 11.15" stroke="#B4B8BF" stroke-width="1.2" stroke-linecap="round" stroke-linejoin="round"/></svg>
<svg class="b" style="left:143.5px;top:784px;" width="24" height="24" viewBox="0 0 16 16" fill="none"><path d="M2.5 7.6L8 2.6L13.5 7.6V12.6C13.5 13.1 13.1 13.5 12.6 13.5H10V9.5H6V13.5H3.4C2.9 13.5 2.5 13.1 2.5 12.6Z" stroke="#CED0D6" stroke-linejoin="round"/></svg>
<span class="t" style="letter-spacing:0.193px;left:171.70000000000002px;top:780.5px;line-height:30px;font-size:20px;color:#BBBBBB;font-family:'Liberation Sans',sans-serif;">Resource Connections</span>
<svg class="b" style="left:116.5px;top:814px;" width="24" height="24" viewBox="0 0 16 16" fill="none"><path d="M5.90 3.14 L6.27 1.53 L9.73 1.53 L10.10 3.14 L11.16 3.75 L12.74 3.26 L14.47 6.27 L13.26 7.39 L13.26 8.61 L14.47 9.73 L12.74 12.74 L11.16 12.25 L10.10 12.86 L9.73 14.47 L6.27 14.47 L5.90 12.86 L4.84 12.25 L3.26 12.74 L1.53 9.73 L2.74 8.61 L2.74 7.39 L1.53 6.27 L3.26 3.26 L4.84 3.75Z" stroke="#CED0D6" stroke-width="1.05" stroke-linejoin="round"/><circle cx="8" cy="8" r="2.15" stroke="#CED0D6" stroke-width="1.05"/></svg>
<span class="t" style="letter-spacing:0.649px;left:144.70000000000002px;top:810.5px;line-height:30px;font-size:20px;color:#BBBBBB;font-family:'Liberation Sans',sans-serif;">.editorconfig</span>
<svg class="b" style="left:116.5px;top:844px;" width="24" height="24" viewBox="0 0 16 16" fill="none"><path d="M2 3.5H14M2 6.5H10M2 9.5H14M2 12.5H10" stroke="#CED0D6" stroke-width="1" stroke-linecap="butt"/></svg>
<span class="t" style="letter-spacing:0.603px;left:144.70000000000002px;top:840.5px;line-height:30px;font-size:20px;color:#BBBBBB;font-family:'Liberation Sans',sans-serif;">.gitattributes</span>
<svg class="b" style="left:116.5px;top:874px;" width="24" height="24" viewBox="0 0 16 16" fill="none"><circle cx="8" cy="8" r="6.5" stroke="#CED0D6"/><path d="M3.6 12.4L12.4 3.6" stroke="#CED0D6"/></svg>
<span class="t" style="letter-spacing:0.542px;left:144.70000000000002px;top:870.5px;line-height:30px;font-size:20px;color:#BBBBBB;font-family:'Liberation Sans',sans-serif;">.gitignore</span>
<svg class="b" style="left:116.5px;top:904px;" width="24" height="24" viewBox="0 0 16 16" fill="none"><rect x="2.75" y="2.95" width="11.1" height="10.5" rx="1.8" fill="#402929" stroke="#DB5C5C" stroke-width="1.2"/><path d="M5.6 5.2L8.3 8.7L11 5.2M8.3 8.7V11.6" stroke="#E67878" stroke-width="1.25" stroke-linecap="round" stroke-linejoin="round"/></svg>
<span class="t" style="letter-spacing:0.571px;left:144.70000000000002px;top:900.5px;line-height:30px;font-size:20px;color:#BBBBBB;font-family:'Liberation Sans',sans-serif;">.gitpod.yml</span>
<svg class="b" style="left:116.5px;top:934px;" width="24" height="24" viewBox="0 0 16 16" fill="none"><path d="M1.2 12.83C1.2 9.5 2.2 6.9 4.4 4.73C5.6 3.9 8.5 3.6 10 4.33C11.4 4.9 12 5.6 12.8 5.7C13.8 5.8 14.6 5.4 15 4.6C15.6 3.6 15.2 2.7 14.4 2.53C13.6 2.3 12.6 2.4 12.07 2.8M15.2 4.4C15.3 6 14.9 7 14.13 7.73C13.3 8.6 12.7 9 12.33 9.67C11.8 10.5 11.53 11.2 11.27 12.83H10.17C10 12 9.4 11.73 8.67 11.73C7.9 11.73 7.3 12 7.13 12.83H5.8C5.6 12 5 11.73 4.13 11.73C3.3 11.73 2.8 12 2.6 12.83H1.2M3.47 6.8C3.6 8 4 8.5 4.67 8.73C5.2 9 5.6 9.05 5.93 9C6.8 8.8 7.5 8.2 8 7.47" stroke="#CED0D6" stroke-width="1.1" stroke-linecap="round" stroke-linejoin="round"/><circle cx="10.17" cy="7.13" r="0.75" fill="#CED0D6"/></svg>
<span class="t" style="letter-spacing:0.465px;left:144.70000000000002px;top:930.5px;line-height:30px;font-size:20px;color:#BBBBBB;font-family:'Liberation Sans',sans-serif;">build.gradle</span>
<svg class="b" style="left:116.5px;top:964px;" width="24" height="24" viewBox="0 0 16 16" fill="none"><rect x="2.75" y="2.95" width="11.1" height="10.5" rx="1.8" fill="#402929" stroke="#DB5C5C" stroke-width="1.2"/><path d="M5.6 5.2L8.3 8.7L11 5.2M8.3 8.7V11.6" stroke="#E67878" stroke-width="1.25" stroke-linecap="round" stroke-linejoin="round"/></svg>
<span class="t" style="letter-spacing:0.666px;left:144.70000000000002px;top:960.5px;line-height:30px;font-size:20px;color:#BBBBBB;font-family:'Liberation Sans',sans-serif;">docker-compose.yml</span>
<svg class="b" style="left:116.5px;top:994px;" width="24" height="24" viewBox="0 0 16 16" fill="none"><rect x="1.5" y="2.5" width="13" height="11" rx="1.8" stroke="#CED0D6"/><path d="M4.2 5.8L6.6 8L4.2 10.2M7.6 10.6H11" stroke="#CED0D6" stroke-linecap="round" stroke-linejoin="round"/></svg>
<span class="t" style="letter-spacing:0.608px;left:144.70000000000002px;top:990.5px;line-height:30px;font-size:20px;color:#BBBBBB;font-family:'Liberation Sans',sans-serif;">gradlew</span>
<svg class="b" style="left:116.5px;top:1024px;" width="24" height="24" viewBox="0 0 16 16" fill="none"><path d="M2 3.5H14M2 6.5H10M2 9.5H14M2 12.5H10" stroke="#CED0D6" stroke-width="1" stroke-linecap="butt"/></svg>
<span class="t" style="letter-spacing:0.655px;left:144.70000000000002px;top:1020.5px;line-height:30px;font-size:20px;color:#BBBBBB;font-family:'Liberation Sans',sans-serif;">gradlew.bat</span>
<svg class="b" style="left:116.5px;top:1054px;" width="24" height="24" viewBox="0 0 16 16" fill="none"><path d="M2 3.5H14M2 6.5H10M2 9.5H14M2 12.5H10" stroke="#CED0D6" stroke-width="1" stroke-linecap="butt"/></svg>
<span class="t" style="letter-spacing:-0.088px;left:144.70000000000002px;top:1050.5px;line-height:30px;font-size:20px;color:#BBBBBB;font-family:'Liberation Sans',sans-serif;">LICENSE.txt</span>
<svg class="b" style="left:116.5px;top:1084px;" width="24" height="24" viewBox="0 0 16 16" fill="none"><rect x="1.5" y="2.5" width="13" height="11" rx="1.8" stroke="#CED0D6"/><path d="M4.2 5.8L6.6 8L4.2 10.2M7.6 10.6H11" stroke="#CED0D6" stroke-linecap="round" stroke-linejoin="round"/></svg>
<span class="t" style="letter-spacing:0.641px;left:144.70000000000002px;top:1080.5px;line-height:30px;font-size:20px;color:#BBBBBB;font-family:'Liberation Sans',sans-serif;">mvnw</span>
<svg class="b" style="left:116.5px;top:1114px;" width="24" height="24" viewBox="0 0 16 16" fill="none"><path d="M2 3.5H14M2 6.5H10M2 9.5H14M2 12.5H10" stroke="#CED0D6" stroke-width="1" stroke-linecap="butt"/></svg>
<span class="t" style="letter-spacing:0.741px;left:144.70000000000002px;top:1110.5px;line-height:30px;font-size:20px;color:#BBBBBB;font-family:'Liberation Sans',sans-serif;">mvnw.cmd</span>
<svg class="b" style="left:116.5px;top:1144px;" width="24" height="24" viewBox="0 0 16 16" fill="none"><path d="M13.7 10.2L9.4 26.8M12.1 16.4C14 12.5 16.8 9.9 19.8 9.9C23.2 9.9 24.3 12.4 23.5 15.6L20.6 26.8M22.9 16.4C24.8 12.5 27.8 9.9 30.9 9.9C34.4 9.9 35.5 12.4 34.7 15.6L31.6 26.8" stroke="#548AF7" stroke-width="3.8" stroke-linecap="round" stroke-linejoin="round" transform="translate(-2.7,-0.55) scale(0.48)"/></svg>
<span class="t" style="letter-spacing:0.560px;left:144.70000000000002px;top:1140.5px;line-height:30px;font-size:20px;color:#BBBBBB;font-family:'Liberation Sans',sans-serif;">pom.xml</span>
<svg class="b" style="left:116.5px;top:1174px;" width="24" height="24" viewBox="0 0 16 16" fill="none"><path d="M1.5 11.5V5.6L5.1 9.6L8.7 5.6V11.5" stroke="#548AF7" stroke-width="1.75" stroke-linejoin="miter" stroke-miterlimit="2"/><path d="M13.6 5.3V11M11.5 9.1L13.6 11.3L15.7 9.1" stroke="#548AF7" stroke-width="1.5" stroke-linecap="round" stroke-linejoin="round"/></svg>
<span class="t" style="letter-spacing:0.316px;left:144.70000000000002px;top:1170.5px;line-height:30px;font-size:20px;color:#BBBBBB;font-family:'Liberation Sans',sans-serif;">readme.md</span>
<svg class="b" style="left:116.5px;top:1204px;" width="24" height="24" viewBox="0 0 16 16" fill="none"><path d="M1.2 12.83C1.2 9.5 2.2 6.9 4.4 4.73C5.6 3.9 8.5 3.6 10 4.33C11.4 4.9 12 5.6 12.8 5.7C13.8 5.8 14.6 5.4 15 4.6C15.6 3.6 15.2 2.7 14.4 2.53C13.6 2.3 12.6 2.4 12.07 2.8M15.2 4.4C15.3 6 14.9 7 14.13 7.73C13.3 8.6 12.7 9 12.33 9.67C11.8 10.5 11.53 11.2 11.27 12.83H10.17C10 12 9.4 11.73 8.67 11.73C7.9 11.73 7.3 12 7.13 12.83H5.8C5.6 12 5 11.73 4.13 11.73C3.3 11.73 2.8 12 2.6 12.83H1.2M3.47 6.8C3.6 8 4 8.5 4.67 8.73C5.2 9 5.6 9.05 5.93 9C6.8 8.8 7.5 8.2 8 7.47" stroke="#CED0D6" stroke-width="1.1" stroke-linecap="round" stroke-linejoin="round"/><circle cx="10.17" cy="7.13" r="0.75" fill="#CED0D6"/></svg>
<span class="t" style="letter-spacing:0.415px;left:144.70000000000002px;top:1200.5px;line-height:30px;font-size:20px;color:#BBBBBB;font-family:'Liberation Sans',sans-serif;">settings.gradle</span>
<svg class="b" style="left:116.5px;top:1234px;" width="24" height="24" viewBox="0 0 16 16" fill="none"><rect x="2.5" y="2.5" width="11" height="11" rx="1.8" fill="#43454A" stroke="#CED0D6" stroke-width="1.1"/><path d="M5 10.6H8" stroke="#CED0D6" stroke-width="1.2"/></svg>
<span class="t" style="letter-spacing:0.590px;left:144.70000000000002px;top:1230.5px;line-height:30px;font-size:20px;color:#8B9423;font-family:'Liberation Sans',sans-serif;">spring-petclinic.iml</span>
<svg class="b" style="left:59px;top:1264px;" width="24" height="24" viewBox="0 0 16 16" fill="none"><path d="M5.85 4.45L9.2 7.8L5.85 11.15" stroke="#B4B8BF" stroke-width="1.2" stroke-linecap="round" stroke-linejoin="round"/></svg>
<svg class="b" style="left:89.5px;top:1264px;" width="24" height="24" viewBox="0 0 16 16" fill="none"><rect x="2.95" y="5.4" width="3.3" height="7.9" stroke="#CED0D6" stroke-width="1.1" stroke-linejoin="round"/><rect x="6.25" y="2.7" width="4.3" height="10.6" stroke="#CED0D6" stroke-width="1.1" stroke-linejoin="round"/><rect x="10.55" y="6.75" width="4.3" height="6.55" stroke="#CED0D6" stroke-width="1.1" stroke-linejoin="round"/></svg>
<span class="t" style="letter-spacing:0.193px;left:117.7px;top:1260.5px;line-height:30px;font-size:20px;color:#BBBBBB;font-family:'Liberation Sans',sans-serif;">External Libraries</span>
<svg class="b" style="left:89.5px;top:1294px;" width="24" height="24" viewBox="0 0 16 16" fill="none"><path d="M2.3 4.5H8.4M2.3 7.5H9M2.3 10.5H14.2M2.3 13.5H10.6" stroke="#CED0D6" stroke-width="1"/><circle cx="12.6" cy="4.2" r="3.6" fill="#548AF7"/><path d="M12.6 2.2V4.4L13.9 5.5" stroke="#2B2D30" stroke-width="0.9" stroke-linecap="round" stroke-linejoin="round"/></svg>
<span class="t" style="letter-spacing:0.209px;left:117.7px;top:1290.5px;line-height:30px;font-size:20px;color:#BBBBBB;font-family:'Liberation Sans',sans-serif;">Scratches and Consoles</span>
<div class="b" style="left:55px;top:1505px;width:589.5px;height:12px;background:#595B5D;"></div>
<div class="b" style="left:693.5px;top:57px;width:324px;height:61px;background:#4E5254;"></div>
<div class="b" style="left:693.5px;top:57px;width:324px;height:1px;background:#3F4244;"></div>
<div class="b" style="left:693.5px;top:114.5px;width:324px;height:5px;background:#777B84;border-radius:2.5px;"></div>
<svg class="b" style="left:711.5px;top:75.5px;" width="24" height="24" viewBox="0 0 16 16" fill="none"><circle cx="8.2" cy="8" r="6.1" fill="#25324D" stroke="#5A8DEE" stroke-width="0.95"/><path d="M10.7 6.1C10.1 5.2 9.2 4.7 8.2 4.7C6.4 4.7 5.1 6.1 5.1 8C5.1 9.9 6.4 11.3 8.2 11.3C9.2 11.3 10.1 10.8 10.7 9.9" stroke="#C9CDD6" stroke-width="1.05" stroke-linecap="round"/><path d="M9.3 0.3V8.4L16.6 4.35Z" fill="#4E5254"/><path d="M10.0 1.4V7.3L15.4 4.35Z" fill="#2C5A30" stroke="#5FAD65" stroke-width="0.8" stroke-linejoin="round"/></svg>
<span class="t" style="letter-spacing:0.359px;left:743.3px;top:72.5px;line-height:30px;font-size:20px;color:#C4C7CC;font-family:'Liberation Sans',sans-serif;">PetClinicApplication.java</span>
<svg class="b" style="left:987px;top:81.5px;" width="13" height="13" viewBox="0 0 13 13" fill="none"><path d="M1.5 1.5L11.5 11.5M11.5 1.5L1.5 11.5" stroke="#7F8388" stroke-width="1.3" stroke-linecap="round"/></svg>
<div class="b" style="left:2220.4px;top:79.0px;width:3.2px;height:3.2px;background:#CED0D6;border-radius:50%;"></div>
<div class="b" style="left:2220.4px;top:87.0px;width:3.2px;height:3.2px;background:#CED0D6;border-radius:50%;"></div>
<div class="b" style="left:2220.4px;top:95.0px;width:3.2px;height:3.2px;background:#CED0D6;border-radius:50%;"></div>
<div class="b" style="left:693px;top:746.5px;width:1557px;height:33px;background:#323232;"></div>
<div class="b" style="left:795px;top:120px;width:1px;height:1398px;background:#444444;"></div>
<span class="t" style="left:729.2px;top:120.7px;line-height:33px;font-size:19px;color:#5B5E61;font-family:'Liberation Mono',monospace;">1</span>
<span class="t" style="left:717.8000000000001px;top:153.7px;line-height:33px;font-size:19px;color:#5B5E61;font-family:'Liberation Mono',monospace;">16</span>
<span class="t" style="left:717.8000000000001px;top:186.7px;line-height:33px;font-size:19px;color:#5B5E61;font-family:'Liberation Mono',monospace;">17</span>
<span class="t" style="left:717.8000000000001px;top:219.7px;line-height:33px;font-size:19px;color:#5B5E61;font-family:'Liberation Mono',monospace;">18</span>
<span class="t" style="left:717.8000000000001px;top:252.7px;line-height:33px;font-size:19px;color:#5B5E61;font-family:'Liberation Mono',monospace;">19</span>
<span class="t" style="left:717.8000000000001px;top:285.7px;line-height:33px;font-size:19px;color:#5B5E61;font-family:'Liberation Mono',monospace;">26</span>
<span class="t" style="left:717.8000000000001px;top:318.7px;line-height:33px;font-size:19px;color:#5B5E61;font-family:'Liberation Mono',monospace;">27</span>
<span class="t" style="left:717.8000000000001px;top:351.7px;line-height:33px;font-size:19px;color:#5B5E61;font-family:'Liberation Mono',monospace;">28</span>
<span class="t" style="left:717.8000000000001px;top:384.7px;line-height:33px;font-size:19px;color:#5B5E61;font-family:'Liberation Mono',monospace;">29</span>
<span class="t" style="left:717.8000000000001px;top:417.7px;line-height:33px;font-size:19px;color:#5B5E61;font-family:'Liberation Mono',monospace;">30</span>
<span class="t" style="left:717.8000000000001px;top:450.7px;line-height:33px;font-size:19px;color:#5B5E61;font-family:'Liberation Mono',monospace;">31</span>
<span class="t" style="left:717.8000000000001px;top:483.7px;line-height:33px;font-size:19px;color:#5B5E61;font-family:'Liberation Mono',monospace;">32</span>
<span class="t" style="left:717.8000000000001px;top:516.7px;line-height:33px;font-size:19px;color:#5B5E61;font-family:'Liberation Mono',monospace;">33</span>
<span class="t" style="left:717.8000000000001px;top:549.7px;line-height:33px;font-size:19px;color:#5B5E61;font-family:'Liberation Mono',monospace;">34</span>
<span class="t" style="left:717.8000000000001px;top:582.7px;line-height:33px;font-size:19px;color:#5B5E61;font-family:'Liberation Mono',monospace;">35</span>
<span class="t" style="left:717.8000000000001px;top:615.7px;line-height:33px;font-size:19px;color:#5B5E61;font-family:'Liberation Mono',monospace;">36</span>
<span class="t" style="left:717.8000000000001px;top:648.7px;line-height:33px;font-size:19px;color:#5B5E61;font-family:'Liberation Mono',monospace;">37</span>
<span class="t" style="left:717.8000000000001px;top:681.7px;line-height:33px;font-size:19px;color:#5B5E61;font-family:'Liberation Mono',monospace;">40</span>
<span class="t" style="left:717.8000000000001px;top:714.7px;line-height:33px;font-size:19px;color:#5B5E61;font-family:'Liberation Mono',monospace;">41</span>
<span class="t" style="left:717.8000000000001px;top:747.7px;line-height:33px;font-size:19px;color:#A1A0A0;font-family:'Liberation Mono',monospace;">42</span>
<svg class="b" style="left:773px;top:125px;" width="24" height="24" viewBox="0 0 16 16" fill="none"><path d="M5.85 4.45L9.2 7.8L5.85 11.15" stroke="#75787C" stroke-width="1.2" stroke-linecap="round" stroke-linejoin="round"/></svg>
<svg class="b" style="left:773px;top:257px;" width="24" height="24" viewBox="0 0 16 16" fill="none"><path d="M5.85 4.45L9.2 7.8L5.85 11.15" stroke="#75787C" stroke-width="1.2" stroke-linecap="round" stroke-linejoin="round"/></svg>
<svg class="b" style="left:773px;top:653px;" width="24" height="24" viewBox="0 0 16 16" fill="none"><path d="M5.85 4.45L9.2 7.8L5.85 11.15" stroke="#75787C" stroke-width="1.2" stroke-linecap="round" stroke-linejoin="round"/></svg>
<svg class="b" style="left:747px;top:585px;" width="26" height="26" viewBox="0 0 20 20" fill="none"><path d="M4.1 3.4V16.6L15.9 10Z" fill="#1F4526" stroke="#4F9C58" stroke-width="1.7" stroke-linejoin="round"/></svg>
<svg class="b" style="left:747px;top:651px;" width="26" height="26" viewBox="0 0 20 20" fill="none"><path d="M4.1 3.4V16.6L15.9 10Z" fill="#1F4526" stroke="#4F9C58" stroke-width="1.7" stroke-linejoin="round"/></svg>
<div class="b" style="left:799px;top:120px;width:60px;height:32px;background:#3A3A3A;"></div>
<span class="t" style="left:799px;top:121px;line-height:33px;font-size:20px;color:#8C8C8C;font-family:'Liberation Mono',monospace;">/.../</span>
<span class="t" style="left:799px;top:187px;line-height:33px;font-size:20px;color:#CC7832;font-family:'Liberation Mono',monospace;">package</span>
<span class="t" style="left:895px;top:187px;line-height:33px;font-size:20px;color:#A9B7C6;font-family:'Liberation Mono',monospace;">org.springframework.samples.petclinic</span>
<span class="t" style="left:1339px;top:187px;line-height:33px;font-size:20px;color:#CC7832;font-family:'Liberation Mono',monospace;">;</span>
<span class="t" style="left:799px;top:253px;line-height:33px;font-size:20px;color:#CC7832;font-family:'Liberation Mono',monospace;">import</span>
<div class="b" style="left:883px;top:251px;width:36px;height:33px;background:#3A3A3A;"></div>
<span class="t" style="left:883px;top:253px;line-height:33px;font-size:20px;color:#8C8C8C;font-family:'Liberation Mono',monospace;">...</span>
<span class="t" style="left:799px;top:319px;line-height:33px;font-size:20px;color:#629755;font-family:'Liberation Mono',monospace;font-style:italic;">/</span>
<span class="t" style="left:810.2px;top:322.7px;line-height:33px;font-size:24px;color:#629755;font-family:'Liberation Mono',monospace;font-style:italic;">*</span>
<span class="t" style="left:822.2px;top:322.7px;line-height:33px;font-size:24px;color:#629755;font-family:'Liberation Mono',monospace;font-style:italic;">*</span>
<span class="t" style="left:810.2px;top:355.7px;line-height:33px;font-size:24px;color:#629755;font-family:'Liberation Mono',monospace;font-style:italic;">*</span>
<span class="t" style="left:835px;top:352px;line-height:33px;font-size:20px;color:#629755;font-family:'Liberation Mono',monospace;font-style:italic;">PetClinic Spring Boot Application.</span>
<span class="t" style="left:810.2px;top:388.7px;line-height:33px;font-size:24px;color:#629755;font-family:'Liberation Mono',monospace;font-style:italic;">*</span>
<span class="t" style="left:810.2px;top:421.7px;line-height:33px;font-size:24px;color:#629755;font-family:'Liberation Mono',monospace;font-style:italic;">*</span>
<span class="t" style="left:835px;top:418px;line-height:33px;font-size:20px;color:#629755;font-family:'Liberation Mono',monospace;font-weight:700;font-style:italic;text-decoration:underline;text-decoration-thickness:1.5px;text-underline-offset:3px;">@author</span>
<span class="t" style="left:931px;top:418px;line-height:33px;font-size:20px;color:#629755;font-family:'Liberation Mono',monospace;font-style:italic;">Dave Syer</span>
<span class="t" style="left:810.2px;top:454.7px;line-height:33px;font-size:24px;color:#629755;font-family:'Liberation Mono',monospace;font-style:italic;">*</span>
<span class="t" style="left:810.2px;top:487.7px;line-height:33px;font-size:24px;color:#629755;font-family:'Liberation Mono',monospace;font-style:italic;">*</span>
<span class="t" style="left:823px;top:484px;line-height:33px;font-size:20px;color:#629755;font-family:'Liberation Mono',monospace;font-style:italic;">/</span>
<span class="t" style="left:799px;top:517px;line-height:33px;font-size:20px;color:#BBB529;font-family:'Liberation Mono',monospace;">@SpringBootApplication</span>
<span class="t" style="left:799px;top:550px;line-height:33px;font-size:20px;color:#BBB529;font-family:'Liberation Mono',monospace;">@ImportRuntimeHints</span>
<span class="t" style="left:1027px;top:550px;line-height:33px;font-size:20px;color:#A9B7C6;font-family:'Liberation Mono',monospace;">(PetClinicRuntimeHints.</span>
<span class="t" style="left:1303px;top:550px;line-height:33px;font-size:20px;color:#CC7832;font-family:'Liberation Mono',monospace;">class</span>
<span class="t" style="left:1363px;top:550px;line-height:33px;font-size:20px;color:#A9B7C6;font-family:'Liberation Mono',monospace;">)</span>
<span class="t" style="left:799px;top:583px;line-height:33px;font-size:20px;color:#CC7832;font-family:'Liberation Mono',monospace;">public class</span>
<span class="t" style="left:955px;top:583px;line-height:33px;font-size:20px;color:#A9B7C6;font-family:'Liberation Mono',monospace;">PetClinicApplication {</span>
<span class="t" style="left:847px;top:649px;line-height:33px;font-size:20px;color:#CC7832;font-family:'Liberation Mono',monospace;">public static void</span>
<span class="t" style="left:1075px;top:649px;line-height:33px;font-size:20px;color:#FFC66D;font-family:'Liberation Mono',monospace;">main</span>
<span class="t" style="left:1123px;top:649px;line-height:33px;font-size:20px;color:#A9B7C6;font-family:'Liberation Mono',monospace;">(String[] args)</span>
<div class="b" style="left:1303px;top:647px;width:36px;height:33px;background:#3A3A3A;"></div>
<span class="t" style="left:1315px;top:649px;line-height:33px;font-size:20px;color:#8C8C8C;font-family:'Liberation Mono',monospace;">{</span>
<span class="t" style="left:1339px;top:649px;line-height:33px;font-size:20px;color:#A9B7C6;font-family:'Liberation Mono',monospace;">SpringApplication.</span>
<span class="t" style="left:1555px;top:649px;line-height:33px;font-size:20px;color:#A9B7C6;font-family:'Liberation Mono',monospace;font-style:italic;">run</span>
<span class="t" style="left:1591px;top:649px;line-height:33px;font-size:20px;color:#A9B7C6;font-family:'Liberation Mono',monospace;">(PetClinicApplication.</span>
<span class="t" style="left:1855px;top:649px;line-height:33px;font-size:20px;color:#CC7832;font-family:'Liberation Mono',monospace;">class</span>
<span class="t" style="left:1915px;top:649px;line-height:33px;font-size:20px;color:#CC7832;font-family:'Liberation Mono',monospace;">,</span>
<span class="t" style="left:1939px;top:649px;line-height:33px;font-size:20px;color:#A9B7C6;font-family:'Liberation Mono',monospace;">args)</span>
<span class="t" style="left:1999px;top:649px;line-height:33px;font-size:20px;color:#CC7832;font-family:'Liberation Mono',monospace;">;</span>
<div class="b" style="left:2011px;top:647px;width:24px;height:33px;background:#3A3A3A;"></div>
<span class="t" style="left:2023px;top:649px;line-height:33px;font-size:20px;color:#8C8C8C;font-family:'Liberation Mono',monospace;">}</span>
<span class="t" style="left:799px;top:715px;line-height:33px;font-size:20px;color:#A9B7C6;font-family:'Liberation Mono',monospace;">}</span>
<svg class="b" style="left:1084.5px;top:525px;" width="14" height="14" viewBox="0 0 14 14" fill="none"><circle cx="7" cy="4.2" r="2.7" fill="#787B80"/><path d="M1.6 12.4C1.6 9.4 3.8 8 7 8C10.2 8 12.4 9.4 12.4 12.4Z" fill="#787B80"/></svg>
<span class="t" style="letter-spacing:0.810px;left:1103px;top:517.5px;line-height:30px;font-size:17.5px;color:#7E8185;font-family:'Liberation Sans',sans-serif;">Antoine Rey +2</span>
<svg class="b" style="left:809px;top:712px;" width="22" height="26" viewBox="0 0 22 26" fill="none">
<path d="M10.6 1.2C6.1 1.2 2.8 4.4 2.8 8.5C2.8 11 4.1 12.8 5.6 14.1C6.5 14.9 6.9 15.6 6.9 16.6V17.4H14.3V16.6C14.3 15.6 14.7 14.9 15.6 14.1C17.1 12.8 18.4 11 18.4 8.5C18.4 4.4 15.1 1.2 10.6 1.2Z" fill="#F2C55C"/>
<path d="M7 19.4H14.2M7.6 21.9H13.6M9 24.2H12.2" stroke="#CED0D6" stroke-width="1.5"/>
</svg>
<svg class="b" style="left:2142px;top:128px;" width="21" height="20" viewBox="0 0 21 20" fill="none">
<path d="M10.6 4.2L17.9 16.6H3.3Z" fill="#D6A81E" stroke="#D6A81E" stroke-width="3" stroke-linejoin="round"/>
<path d="M10.6 6.4V11.6" stroke="#3A2A08" stroke-width="2.1" stroke-linecap="round"/><circle cx="10.6" cy="15" r="1.25" fill="#3A2A08"/>
</svg>
<span class="t" style="left:2166.5px;top:123.5px;line-height:30px;font-size:20px;color:#C4C4C4;font-family:'Liberation Sans',sans-serif;">3</span>
<svg class="b" style="left:2188.6px;top:127.4px;" width="24" height="24" viewBox="0 0 16 16" fill="none"><path d="M4.45 9.9L8.2 6.2L11.95 9.9" stroke="#C8CACD" stroke-width="1.2" stroke-linecap="round" stroke-linejoin="round"/></svg>
<svg class="b" style="left:2219.6px;top:128.9px;" width="24" height="24" viewBox="0 0 16 16" fill="none"><path d="M4.45 5.2L8.2 8.9L11.95 5.2" stroke="#C8CACD" stroke-width="1.2" stroke-linecap="round" stroke-linejoin="round"/></svg>
<div class="b" style="left:2238px;top:155px;width:2px;height:1363px;background:#4D4D4D;"></div>
<div class="b" style="left:2238px;top:120px;width:2px;height:2px;background:#4D4D4D;"></div>
<div class="b" style="left:2229px;top:289.5px;width:21px;height:3px;background:#C9A227;"></div>
<svg class="b" style="left:2260px;top:65px;" width="44" height="44" viewBox="0 0 44 44" fill="none">
<path d="M11 30.7L14 23.5V18.2C14 13.4 17.4 10.2 22 10.2C26.6 10.2 30 13.4 30 18.2V23.5L33.3 30.7Z" stroke="#CED0D6" stroke-width="1.9" stroke-linejoin="round"/>
<path d="M18.9 33.4H25.1C25.1 35.5 23.7 36.9 22 36.9C20.3 36.9 18.9 35.5 18.9 33.4Z" fill="#CED0D6"/>
<circle cx="31" cy="12.9" r="6.9" fill="#3C3F41"/><circle cx="31" cy="12.9" r="5.5" fill="#548AF7"/>
</svg>
<svg class="b" style="left:2266px;top:132px;" width="32" height="32" viewBox="0 0 32 32" fill="none"><path d="M5.60 6.30C6.50 6.03 9.18 5.00 11.00 4.70C12.82 4.40 14.58 4.25 16.50 4.50C18.42 4.75 20.83 5.20 22.50 6.20C24.17 7.20 25.62 9.03 26.50 10.50C27.38 11.97 27.75 13.55 27.80 15.00C27.85 16.45 27.52 18.07 26.80 19.20C26.08 20.33 24.93 21.23 23.50 21.80C22.07 22.37 19.92 22.63 18.20 22.60C16.48 22.57 14.50 22.30 13.20 21.60C11.90 20.90 10.77 19.47 10.40 18.40C10.03 17.33 10.47 16.00 11.00 15.20C11.53 14.40 12.67 13.73 13.60 13.60C14.53 13.47 16.10 14.27 16.60 14.40" stroke="#CED0D6" stroke-width="2" stroke-linecap="round"/><path d="M26.40 25.70C25.50 25.97 22.82 27.00 21.00 27.30C19.18 27.60 17.42 27.75 15.50 27.50C13.58 27.25 11.17 26.80 9.50 25.80C7.83 24.80 6.38 22.97 5.50 21.50C4.62 20.03 4.25 18.45 4.20 17.00C4.15 15.55 4.48 13.93 5.20 12.80C5.92 11.67 7.07 10.77 8.50 10.20C9.93 9.63 12.08 9.37 13.80 9.40C15.52 9.43 17.50 9.70 18.80 10.40C20.10 11.10 21.23 12.53 21.60 13.60C21.97 14.67 21.53 16.00 21.00 16.80C20.47 17.60 19.33 18.27 18.40 18.40C17.47 18.53 15.90 17.73 15.40 17.60" stroke="#CED0D6" stroke-width="2" stroke-linecap="round"/></svg>
<svg class="b" style="left:2262px;top:188px;" width="40" height="40" viewBox="0 0 40 40" fill="none">
<path d="M9 18.2C6.6 19 5.5 20.8 5.5 23V26C5.5 27.4 6.2 28.3 7.4 29C10.4 30.9 15 32.5 20 32.5C25 32.5 29.6 30.9 32.6 29C33.8 28.3 34.4 27.4 34.4 26V23C34.4 20.8 33.4 19 31 18.2Z" fill="#CED0D6"/>
<path d="M10.9 19.6H29V27.4C26.6 28.6 23.4 29.4 20 29.4C16.6 29.4 13.4 28.6 10.9 27.4Z" fill="#3C3F41"/>
<rect x="9.6" y="8.4" width="9.3" height="9.4" rx="3.9" stroke="#CED0D6" stroke-width="2.8" fill="#3C3F41"/>
<rect x="21.1" y="8.4" width="9.3" height="9.4" rx="3.9" stroke="#CED0D6" stroke-width="2.8" fill="#3C3F41"/>
<rect x="15.4" y="21.6" width="2.4" height="5.2" rx="1.1" fill="#CED0D6"/><rect x="22.1" y="21.6" width="2.4" height="5.2" rx="1.1" fill="#CED0D6"/>
</svg>
<svg class="b" style="left:2260px;top:250px;" width="44" height="36" viewBox="0 0 44 36" fill="none"><path d="M13.7 10.2L9.4 26.8M12.1 16.4C14 12.5 16.8 9.9 19.8 9.9C23.2 9.9 24.3 12.4 23.5 15.6L20.6 26.8M22.9 16.4C24.8 12.5 27.8 9.9 30.9 9.9C34.4 9.9 35.5 12.4 34.7 15.6L31.6 26.8" stroke="#CED0D6" stroke-width="2.9" stroke-linecap="round" stroke-linejoin="round"/></svg>
<svg class="b" style="left:2262px;top:308px;" width="40" height="40" viewBox="0 0 40 40" fill="none">
<path d="M32.4 6C28.6 6.2 25.6 6.8 23.1 7.7C21.4 8.4 20.2 9.3 19 10.5L10 12.1L12.3 16.45L11.05 20.6L17 26.7L21.3 26.5L25.7 29L27.8 20.6C29.2 18.8 30 16.8 30.6 14.4C31.4 11.6 32 9 32.4 6Z" fill="#B2B4B6"/>
<circle cx="24" cy="14.3" r="2.85" fill="#3C3F41"/>
<path d="M11.05 23.1L15.2 27.2C13.8 28.8 12.4 30 10.8 30.8C9.2 31.5 7.6 31.9 5.9 32C5.9 30.8 6 29.6 6.4 28.3C7.4 26.2 9 24.4 11.05 23.1Z" fill="#B2B4B6"/>
</svg>
<svg class="b" style="left:2262px;top:368px;" width="40" height="40" viewBox="0 0 40 40" fill="none">
<path d="M9.2 17.6C7.4 19.4 5.9 21.2 5.9 23.4C5.9 24.8 6.1 25.8 6.9 26.8C9.4 29.4 15 31.6 20.8 32.7L18.8 29.6L11.05 26.8V19.4Z" fill="#CED0D6"/>
<rect x="9.9" y="8.6" width="9.0" height="8.6" rx="3.8" stroke="#CED0D6" stroke-width="2.8" fill="#3C3F41"/>
<rect x="21.4" y="8.6" width="9.0" height="8.0" rx="3.8" stroke="#CED0D6" stroke-width="2.8" fill="#3C3F41"/>
<rect x="15.7" y="22.1" width="2.3" height="5" rx="1.1" fill="#CED0D6"/>
<path d="M19 18.6H35.6V31.6H32.4L31 35.8L26.6 31.6H19Z" fill="#3C3F41"/>
<path d="M22.8 20H31.8C33.2 20 34.2 21 34.2 22.4V27.9C34.2 29.3 33.2 30.3 31.8 30.3H31.1L30.8 34.2L27.8 30.3H22.8C21.4 30.3 20.4 29.3 20.4 27.9V22.4C20.4 21 21.4 20 22.8 20Z" fill="#CED0D6"/>
</svg>
<svg class="b" style="left:2262px;top:428px;" width="40" height="40" viewBox="0 0 40 40" fill="none">
<path d="M12.9 8H16.6L19.3 19.4L14.6 30.4H5.9Z" fill="#21A3D1" stroke="#0E5E7E" stroke-width="1" stroke-linejoin="round"/>
<path d="M16.9 8.6H22.5L26.5 18.4" stroke="#3AA6CF" stroke-width="1.6" stroke-linejoin="round" stroke-linecap="round"/>
<path d="M17.1 10L20.7 22" stroke="#3AA6CF" stroke-width="1.4" stroke-linecap="round"/>
<path d="M11.9 23.1L16.6 22.4L18.2 19.4L19.5 22.7L22.2 24L19.3 25.3L18.6 29L16.7 25.6Z" fill="#3C3F41"/>
<path d="M14.6 30.4L17.4 27.4L12.4 23.4L5.9 30.4Z" fill="#21A3D1"/>
<circle cx="27.2" cy="22.7" r="3.5" fill="#4FBCEB"/>
<circle cx="22.8" cy="28.1" r="3.6" fill="#4FBCEB"/>
<path d="M23.6 24.4L26.8 27" stroke="#14506B" stroke-width="1.6"/>
<path d="M29.4 21L31.2 19.4" stroke="#B4CAD2" stroke-width="2.2" stroke-linecap="round"/>
<path d="M20.6 30.4L19.4 31.8" stroke="#4FBCEB" stroke-width="2" stroke-linecap="round"/>
</svg>
<svg class="b" style="left:6.5px;top:1529px;" width="24" height="24" viewBox="0 0 16 16" fill="none"><rect x="4.6" y="4.2" width="7.4" height="7.5" rx="1.7" fill="#25324D" stroke="#6F95EE" stroke-width="0.95"/></svg>
<span class="t" style="letter-spacing:0.751px;left:31.000000000000004px;top:1525px;line-height:30px;font-size:20px;color:#BBBBBB;font-family:'Liberation Sans',sans-serif;">hello-webapp</span>
<span class="t" style="letter-spacing:0.576px;left:196.20000000000002px;top:1525px;line-height:30px;font-size:20px;color:#BBBBBB;font-family:'Liberation Sans',sans-serif;">src</span>
<span class="t" style="letter-spacing:0.160px;left:261.8px;top:1525px;line-height:30px;font-size:20px;color:#BBBBBB;font-family:'Liberation Sans',sans-serif;">main</span>
<span class="t" style="letter-spacing:0.324px;left:341.8px;top:1525px;line-height:30px;font-size:20px;color:#BBBBBB;font-family:'Liberation Sans',sans-serif;">java</span>
<span class="t" style="letter-spacing:0.631px;left:417.0px;top:1525px;line-height:30px;font-size:20px;color:#BBBBBB;font-family:'Liberation Sans',sans-serif;">org</span>
<span class="t" style="letter-spacing:0.518px;left:484.0px;top:1525px;line-height:30px;font-size:20px;color:#BBBBBB;font-family:'Liberation Sans',sans-serif;">springframework</span>
<span class="t" style="letter-spacing:0.217px;left:676.0px;top:1525px;line-height:30px;font-size:20px;color:#BBBBBB;font-family:'Liberation Sans',sans-serif;">samples</span>
<span class="t" style="letter-spacing:0.637px;left:788.8px;top:1525px;line-height:30px;font-size:20px;color:#BBBBBB;font-family:'Liberation Sans',sans-serif;">petclinic</span>
<svg class="b" style="left:166px;top:1529px;" width="24" height="24" viewBox="0 0 16 16" fill="none"><path d="M5.85 4.45L9.2 7.8L5.85 11.15" stroke="#9DA0A5" stroke-width="1.2" stroke-linecap="round" stroke-linejoin="round"/></svg>
<svg class="b" style="left:231px;top:1529px;" width="24" height="24" viewBox="0 0 16 16" fill="none"><path d="M5.85 4.45L9.2 7.8L5.85 11.15" stroke="#9DA0A5" stroke-width="1.2" stroke-linecap="round" stroke-linejoin="round"/></svg>
<svg class="b" style="left:312px;top:1529px;" width="24" height="24" viewBox="0 0 16 16" fill="none"><path d="M5.85 4.45L9.2 7.8L5.85 11.15" stroke="#9DA0A5" stroke-width="1.2" stroke-linecap="round" stroke-linejoin="round"/></svg>
<svg class="b" style="left:387px;top:1529px;" width="24" height="24" viewBox="0 0 16 16" fill="none"><path d="M5.85 4.45L9.2 7.8L5.85 11.15" stroke="#9DA0A5" stroke-width="1.2" stroke-linecap="round" stroke-linejoin="round"/></svg>
<svg class="b" style="left:454px;top:1529px;" width="24" height="24" viewBox="0 0 16 16" fill="none"><path d="M5.85 4.45L9.2 7.8L5.85 11.15" stroke="#9DA0A5" stroke-width="1.2" stroke-linecap="round" stroke-linejoin="round"/></svg>
<svg class="b" style="left:646px;top:1529px;" width="24" height="24" viewBox="0 0 16 16" fill="none"><path d="M5.85 4.45L9.2 7.8L5.85 11.15" stroke="#9DA0A5" stroke-width="1.2" stroke-linecap="round" stroke-linejoin="round"/></svg>
<svg class="b" style="left:759px;top:1529px;" width="24" height="24" viewBox="0 0 16 16" fill="none"><path d="M5.85 4.45L9.2 7.8L5.85 11.15" stroke="#9DA0A5" stroke-width="1.2" stroke-linecap="round" stroke-linejoin="round"/></svg>
<svg class="b" style="left:873px;top:1529px;" width="24" height="24" viewBox="0 0 16 16" fill="none"><path d="M5.85 4.45L9.2 7.8L5.85 11.15" stroke="#9DA0A5" stroke-width="1.2" stroke-linecap="round" stroke-linejoin="round"/></svg>
<svg class="b" style="left:902px;top:1528px;" width="24" height="24" viewBox="0 0 16 16" fill="none"><circle cx="8.2" cy="8" r="6.1" fill="#25324D" stroke="#5A8DEE" stroke-width="0.95"/><path d="M10.7 6.1C10.1 5.2 9.2 4.7 8.2 4.7C6.4 4.7 5.1 6.1 5.1 8C5.1 9.9 6.4 11.3 8.2 11.3C9.2 11.3 10.1 10.8 10.7 9.9" stroke="#C9CDD6" stroke-width="1.05" stroke-linecap="round"/><path d="M9.3 0.3V8.4L16.6 4.35Z" fill="#3C3F41"/><path d="M10.0 1.4V7.3L15.4 4.35Z" fill="#2C5A30" stroke="#5FAD65" stroke-width="0.8" stroke-linejoin="round"/></svg>
<span class="t" style="letter-spacing:0.437px;left:932.3px;top:1525px;line-height:30px;font-size:20px;color:#BBBBBB;font-family:'Liberation Sans',sans-serif;">PetClinicApplication</span>
<div class="b" style="left:1879.5px;top:1531.5px;width:19px;height:19px;background:#E8000C;border-radius:50%;"></div>
<span class="t" style="letter-spacing:0.266px;left:1926px;top:1525px;line-height:30px;font-size:20px;color:#BBBBBB;font-family:'Liberation Sans',sans-serif;">42:1</span>
<span class="t" style="letter-spacing:-0.172px;left:1988.5px;top:1525px;line-height:30px;font-size:20px;color:#BBBBBB;font-family:'Liberation Sans',sans-serif;">LF</span>
<span class="t" style="letter-spacing:0.466px;left:2035.5px;top:1525px;line-height:30px;font-size:20px;color:#BBBBBB;font-family:'Liberation Sans',sans-serif;">UTF-8</span>
<svg class="b" style="left:2118px;top:1531px;" width="24" height="23" viewBox="0 0 24 23" fill="none">
<path d="M7.4 2C4.6 2 3.2 3.4 3.2 6C3.2 7.2 3.5 8 3.9 8.5C2.1 9.3 1 10.8 1 12.8V14.8C1 15.6 1.4 16.3 2.1 16.8C4.5 18.4 8.3 19.8 12 19.8C15.7 19.8 19.5 18.4 21.9 16.8C22.6 16.3 23 15.6 23 14.8V12.8C23 10.8 21.9 9.3 20.1 8.5C20.5 8 20.8 7.2 20.8 6C20.8 3.4 19.4 2 16.6 2C14 2 12.6 3 12 4.4C11.4 3 10 2 7.4 2Z" fill="#CED0D6"/>
<path d="M7.6 3.8C5.8 3.8 5 4.6 5 6.2C5 7.9 5.8 8.7 7.8 8.7C9.8 8.7 10.6 7.7 10.6 6.1C10.6 4.6 9.6 3.8 7.6 3.8ZM16.4 3.8C18.2 3.8 19 4.6 19 6.2C19 7.9 18.2 8.7 16.2 8.7C14.2 8.7 13.4 7.7 13.4 6.1C13.4 4.6 14.4 3.8 16.4 3.8Z" fill="#3C3F41"/>
<path d="M5.2 10.9C5.2 10.9 7.2 10.2 12 10.2C16.8 10.2 18.8 10.9 18.8 10.9V16.1C17.2 17 14.7 17.8 12 17.8C9.3 17.8 6.8 17 5.2 16.1Z" fill="#3C3F41"/>
<rect x="8.4" y="11.9" width="2" height="4" rx="1" fill="#CED0D6"/><rect x="13.6" y="11.9" width="2" height="4" rx="1" fill="#CED0D6"/>
</svg>
<span class="t" style="letter-spacing:1.492px;left:2165.8px;top:1525px;line-height:30px;font-size:20px;color:#BBBBBB;font-family:'Liberation Sans',sans-serif;">Tab*</span>
<svg class="b" style="left:2214px;top:1528px;" width="26" height="28" viewBox="0 0 26 28" fill="none">
<path d="M10.6 23.6H6.6C5.3 23.6 4.3 22.6 4.3 21.3V9.2L9.4 3.9H16.4C17.7 3.9 18.7 4.9 18.7 6.2V11.8" stroke="#CED0D6" stroke-width="1.5" stroke-linecap="round" stroke-linejoin="round"/>
<path d="M4.6 9.4H7.8C8.9 9.4 9.8 8.5 9.8 7.4V4.2" stroke="#CED0D6" stroke-width="1.5"/>
<path d="M15.38 16.00 L15.61 14.76 L17.99 14.76 L18.22 16.00 L18.86 16.37 L20.05 15.95 L21.24 18.01 L20.28 18.83 L20.28 19.57 L21.24 20.39 L20.05 22.45 L18.86 22.03 L18.22 22.40 L17.99 23.64 L15.61 23.64 L15.38 22.40 L14.74 22.03 L13.55 22.45 L12.36 20.39 L13.32 19.57 L13.32 18.83 L12.36 18.01 L13.55 15.95 L14.74 16.37Z" stroke="#CED0D6" stroke-width="1.6" stroke-linejoin="round" fill="#3C3F41"/>
<circle cx="16.8" cy="19.2" r="1.1" fill="#CED0D6"/>
</svg>
<svg class="b" style="left:2262px;top:1528px;" width="28" height="26" viewBox="0 0 28 26" fill="none">
<rect x="4.3" y="12.9" width="13.4" height="8.4" rx="2" stroke="#CED0D6" stroke-width="1.5"/>
<path d="M10.8 15.4V18.8" stroke="#CED0D6" stroke-width="1.7"/>
<path d="M14.1 12.6V8.6C14.1 6.4 15.8 4.8 18 4.8C20.2 4.8 21.9 6.4 21.9 8.6V10.6" stroke="#CED0D6" stroke-width="1.5" stroke-linecap="round"/>
</svg>
<svg class="b" style="left:98px;top:728px;" width="48" height="64" viewBox="0 0 48 64" fill="none">
<path d="M6.15 6.56L38.74 39.2L23.6 39.25L30.07 55.8L24.68 58.25L15.92 42.28L6.15 52.1Z" fill="#FFFFFF" stroke="#000000" stroke-width="2.7" stroke-linejoin="miter" stroke-miterlimit="10"/>
</svg>
<div class="b" style="left:66.6px;top:695.5px;width:72.4px;height:72.4px;background:rgba(255,255,6,0.51);border-radius:50%;"></div>
</body></html>
